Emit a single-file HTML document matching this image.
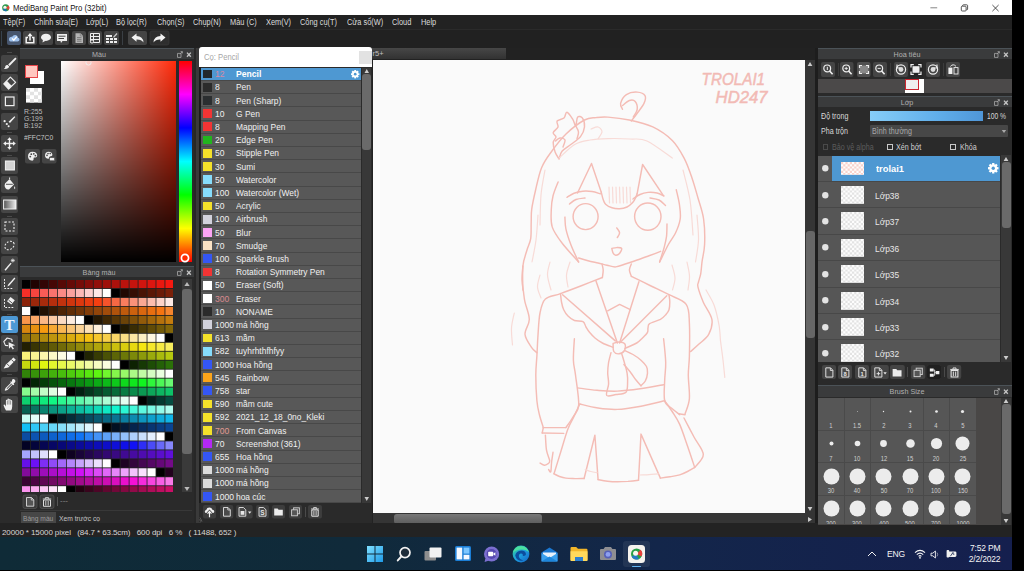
<!DOCTYPE html>
<html lang="vi"><head><meta charset="utf-8"><title>MediBang Paint Pro (32bit)</title>
<style>
html,body{margin:0;padding:0;background:#000}
body{width:1024px;height:571px;overflow:hidden;position:relative;font-family:"Liberation Sans",sans-serif}
#win{position:absolute;left:0;top:0;width:1012.4px;height:538px;background:#2a2a2a;overflow:hidden}
.t{position:absolute;white-space:nowrap;font-family:"Liberation Sans",sans-serif}
.btn{position:absolute;background:#444;border-radius:2px}
.hdr{position:absolute;background:#3a3b3c;border-top:1px solid #4b5257;box-sizing:border-box}
svg{overflow:visible}
</style></head><body><div id="win">
<div style="position:absolute;left:0px;top:0px;width:1012.4px;height:15.2px;background:#fff"></div><svg style="position:absolute;left:1.8px;top:3.8px;" width="7.4" height="7.4" viewBox="0 0 9 9"><circle cx="4.5" cy="4.5" r="4.3" fill="#2d9a4e"/><path d="M4.5 4.5 L8 1.8 A4.3 4.3 0 0 1 7.8 7.4 Z" fill="#e2453c"/><circle cx="3.6" cy="4.2" r="2" fill="#f4f6e8"/><path d="M1 6.5 A4.3 4.3 0 0 0 6 8.6 L4 5.5Z" fill="#1c6fb8"/></svg><div class="t" style="left:13.3px;top:2.7px;font-size:8.5px;line-height:10.5px;color:#111;transform-origin:0 0;transform:scaleX(0.916);">MediBang Paint Pro (32bit)</div><svg style="position:absolute;left:929px;top:2.5px;" width="10" height="10" viewBox="0 0 10 10"><path d="M1.4 4.8H8.2" stroke="#777" stroke-width="0.9" fill="none"/></svg><svg style="position:absolute;left:959px;top:2.5px;" width="10" height="10" viewBox="0 0 10 10"><rect x="2.3" y="3.2" width="4.8" height="4.8" rx="0.9" stroke="#444" stroke-width="0.9" fill="none"/><path d="M3.6 3V2.6Q3.6 1.8 4.4 1.8H7.8Q8.6 1.8 8.6 2.6V6Q8.6 6.8 7.8 6.8H7.4" stroke="#444" stroke-width="0.9" fill="none"/></svg><svg style="position:absolute;left:991px;top:2.5px;" width="10" height="10" viewBox="0 0 10 10"><path d="M1.4 2L7.6 8.2M7.6 2L1.4 8.2" stroke="#333" stroke-width="0.85" fill="none"/></svg><div style="position:absolute;left:0px;top:15.2px;width:1012.4px;height:14.3px;background:#222"></div><div class="t" style="left:3.2px;top:17.2px;font-size:8.5px;line-height:10.5px;color:#dcdcdc;transform-origin:0 0;transform:scaleX(0.87);">Tệp(F)</div><div class="t" style="left:33.7px;top:17.2px;font-size:8.5px;line-height:10.5px;color:#dcdcdc;transform-origin:0 0;transform:scaleX(0.87);">Chỉnh sửa(E)</div><div class="t" style="left:85.8px;top:17.2px;font-size:8.5px;line-height:10.5px;color:#dcdcdc;transform-origin:0 0;transform:scaleX(0.87);">Lớp(L)</div><div class="t" style="left:116.3px;top:17.2px;font-size:8.5px;line-height:10.5px;color:#dcdcdc;transform-origin:0 0;transform:scaleX(0.87);">Bộ lọc(R)</div><div class="t" style="left:156.8px;top:17.2px;font-size:8.5px;line-height:10.5px;color:#dcdcdc;transform-origin:0 0;transform:scaleX(0.87);">Chọn(S)</div><div class="t" style="left:192.6px;top:17.2px;font-size:8.5px;line-height:10.5px;color:#dcdcdc;transform-origin:0 0;transform:scaleX(0.87);">Chụp(N)</div><div class="t" style="left:229.7px;top:17.2px;font-size:8.5px;line-height:10.5px;color:#dcdcdc;transform-origin:0 0;transform:scaleX(0.87);">Màu (C)</div><div class="t" style="left:265.6px;top:17.2px;font-size:8.5px;line-height:10.5px;color:#dcdcdc;transform-origin:0 0;transform:scaleX(0.87);">Xem(V)</div><div class="t" style="left:300px;top:17.2px;font-size:8.5px;line-height:10.5px;color:#dcdcdc;transform-origin:0 0;transform:scaleX(0.87);">Công cụ(T)</div><div class="t" style="left:346.5px;top:17.2px;font-size:8.5px;line-height:10.5px;color:#dcdcdc;transform-origin:0 0;transform:scaleX(0.87);">Cửa sổ(W)</div><div class="t" style="left:391.8px;top:17.2px;font-size:8.5px;line-height:10.5px;color:#dcdcdc;transform-origin:0 0;transform:scaleX(0.87);">Cloud</div><div class="t" style="left:420.5px;top:17.2px;font-size:8.5px;line-height:10.5px;color:#dcdcdc;transform-origin:0 0;transform:scaleX(0.87);">Help</div><div style="position:absolute;left:0px;top:29.5px;width:1012.4px;height:18px;background:#212121"></div><div style="position:absolute;left:0.5px;top:30.5px;width:1.6px;height:15.5px;background:#37424d"></div><svg style="position:absolute;left:6.7px;top:31.3px;" width="14" height="14" viewBox="0 0 14 14"><rect width="14" height="14" rx="2" fill="#47566e"/><path d="M3.5 10.5H10.5Q12.5 10.5 12.5 8.6Q12.5 7 10.9 6.8Q10.6 4 8 4Q6 4 5.2 5.8Q2 5.6 2 8.3Q2 10.5 3.5 10.5Z" fill="#9fc2ee"/><path d="M5 7.4L6.8 9.2L9.8 5.6" stroke="#fff" stroke-width="1.3" fill="none"/></svg><svg style="position:absolute;left:22.8px;top:31.3px;" width="14" height="14" viewBox="0 0 14 14"><rect width="14" height="14" rx="2" fill="#444"/><path d="M5 6.4H3.2V11.8H10.8V6.4H9" stroke="#f4f4f4" stroke-width="1.5" fill="none"/><path d="M7 9.5V3.4" stroke="#f4f4f4" stroke-width="1.5" fill="none"/><path d="M4.4 5.2L7 2L9.6 5.2Z" fill="#f4f4f4"/></svg><svg style="position:absolute;left:39px;top:31.3px;" width="14" height="14" viewBox="0 0 14 14"><rect width="14" height="14" rx="2" fill="#444"/><ellipse cx="7" cy="6.3" rx="5" ry="3.6" fill="#eee"/><path d="M4 8.5L3.5 11.5L7 9.5Z" fill="#eee"/></svg><svg style="position:absolute;left:55.4px;top:31.3px;" width="14" height="14" viewBox="0 0 14 14"><rect width="14" height="14" rx="2" fill="#444"/><path d="M2 3H12V10H7.5L6 12L5.5 10H2Z" fill="#eee"/><path d="M3.5 5.2H10.5M3.5 7.5H9" stroke="#444" stroke-width="1"/></svg><svg style="position:absolute;left:71.7px;top:31.3px;" width="14" height="14" viewBox="0 0 14 14"><rect width="14" height="14" rx="2" fill="#444"/><path d="M3.5 2.2H8.5L11 4.7V12H3.5Z" fill="#b4b4b4"/><path d="M8.3 2.2V5H11" stroke="#777" stroke-width="0.7" fill="none"/><path d="M5 6.6H9.5M5 8.4H9.5M5 10.2H9.5" stroke="#6c6c6c" stroke-width="0.8"/></svg><svg style="position:absolute;left:87.9px;top:31.3px;" width="14" height="14" viewBox="0 0 14 14"><rect width="14" height="14" rx="2" fill="#444"/><path d="M2.5 2.5H11.5V11.5H2.5ZM2.5 5.5H11.5M2.5 8.5H11.5M5.5 2.5V11.5" stroke="#eee" stroke-width="1" fill="none"/><circle cx="4" cy="10.5" r="1.6" fill="#444" stroke="#eee" stroke-width="0.9"/></svg><svg style="position:absolute;left:104px;top:31.3px;" width="14" height="14" viewBox="0 0 14 14"><rect width="15" height="14" rx="2" fill="#444"/><path d="M2 4H8V6H2ZM2 7H5V9H2ZM6 7H9V9H6ZM10 7H13V9H10ZM2 10H5V12H2ZM6 10H9V12H6ZM10 10H13V12H10Z" fill="#eee"/><path d="M9 6L12.5 2L13.5 3L10 6.8Z" fill="#ccc"/></svg><div style="position:absolute;left:122px;top:31px;width:1px;height:14px;background:#3a3f44"></div><svg style="position:absolute;left:128.3px;top:31.3px;" width="19" height="14" viewBox="0 0 19 14"><rect width="19" height="14" rx="2" fill="#444"/><path d="M3.5 6.5L8.5 2.5V5Q15 5 15.5 11.5Q13.5 8.3 8.5 8.5V10.8Z" fill="#f2f2f2"/></svg><svg style="position:absolute;left:150.3px;top:31.3px;" width="19" height="14" viewBox="0 0 19 14"><rect width="19" height="14" rx="2" fill="#2e2e2e" stroke="#3c3c3c" stroke-width="0.6"/><path d="M15.5 6.5L10.5 2.5V5Q4 5 3.5 11.5Q5.5 8.3 10.5 8.5V10.8Z" fill="#f2f2f2"/></svg><div style="position:absolute;left:0px;top:47.5px;width:20px;height:480px;background:#2b2b2b"></div><svg style="position:absolute;left:1.2px;top:55px;" width="17" height="17" viewBox="0 0 17 17"><rect width="17" height="17" rx="2" fill="#454545"/><path d="M14.3 2.4L15.6 3.7L8.6 10.9L7.2 9.5Z" fill="#f0f0f0"/><path d="M6.6 9.9L8.2 11.5Q7.6 14.3 2.8 13.9Q4.6 12.8 4.3 11.3Q4.9 9.7 6.6 9.9Z" fill="#f0f0f0"/></svg><svg style="position:absolute;left:1.2px;top:74.2px;" width="17" height="17" viewBox="0 0 17 17"><rect width="17" height="17" rx="2" fill="#454545"/><path d="M9.4 3.2L14.6 8.4L7.6 15L2.8 9.8Z" fill="none" stroke="#f0f0f0" stroke-width="1.2" stroke-linejoin="round"/><path d="M2.8 9.8L5.8 6.8L10.8 12L7.6 15Z" fill="#f0f0f0"/></svg><svg style="position:absolute;left:1.2px;top:93.4px;" width="17" height="17" viewBox="0 0 17 17"><rect width="17" height="17" rx="2" fill="#454545"/><rect x="4.4" y="4" width="8.6" height="8.6" fill="none" stroke="#f0f0f0" stroke-width="1.2"/></svg><svg style="position:absolute;left:1.2px;top:112.6px;" width="17" height="17" viewBox="0 0 17 17"><rect width="17" height="17" rx="2" fill="#454545"/><path d="M13.4 3.2L14.3 4.1L9 10L7.6 8.7Z" fill="#f0f0f0"/><circle cx="3.6" cy="8.2" r="1.1" fill="#f0f0f0"/><circle cx="5.8" cy="11" r="1.1" fill="#f0f0f0"/><circle cx="7.6" cy="13.2" r="1" fill="#f0f0f0"/></svg><svg style="position:absolute;left:1.2px;top:134.6px;" width="17" height="17" viewBox="0 0 17 17"><rect width="17" height="17" rx="2" fill="#454545"/><path d="M8.5 2.2L10.8 5H9.2V7.8H12V6.2L14.8 8.5L12 10.8V9.2H9.2V12H10.8L8.5 14.8L6.2 12H7.8V9.2H5V10.8L2.2 8.5L5 6.2V7.8H7.8V5H6.2Z" fill="#f0f0f0"/></svg><svg style="position:absolute;left:1.2px;top:157px;" width="17" height="17" viewBox="0 0 17 17"><rect width="17" height="17" rx="2" fill="#454545"/><rect x="4.4" y="4" width="9" height="9" fill="#d4d4d4" stroke="#f4f4f4" stroke-width="1"/></svg><svg style="position:absolute;left:1.2px;top:176.2px;" width="17" height="17" viewBox="0 0 17 17"><rect width="17" height="17" rx="2" fill="#454545"/><path d="M4 7.5L8.6 3L13 8.4L8 13.4Q6 14 4.4 12Q3 10 4 7.5Z" fill="#f0f0f0"/><path d="M5 8.3L11.8 8.3" stroke="#454545" stroke-width="0.9"/><path d="M13.6 10Q15 12.3 13.7 13.2Q12.4 12.5 13.6 10Z" fill="#f0f0f0"/><path d="M8.6 3V1.5" stroke="#f0f0f0" stroke-width="1"/></svg><svg style="position:absolute;left:1.2px;top:195.5px;" width="17" height="17" viewBox="0 0 17 17"><rect width="17" height="17" rx="2" fill="#454545"/><defs><linearGradient id="tg" x1="0" x2="1"><stop offset="0" stop-color="#555"/><stop offset="1" stop-color="#eee"/></linearGradient></defs><rect x="2.6" y="4" width="12.4" height="9" fill="url(#tg)" stroke="#f0f0f0" stroke-width="1"/></svg><svg style="position:absolute;left:1.2px;top:218px;" width="17" height="17" viewBox="0 0 17 17"><rect width="17" height="17" rx="2" fill="#454545"/><rect x="4" y="4" width="9" height="9" fill="none" stroke="#f0f0f0" stroke-width="1.1" stroke-dasharray="2 1.5"/></svg><svg style="position:absolute;left:1.2px;top:237px;" width="17" height="17" viewBox="0 0 17 17"><rect width="17" height="17" rx="2" fill="#454545"/><ellipse cx="8.5" cy="8.5" rx="5" ry="3.8" transform="rotate(-35 8.5 8.5)" fill="none" stroke="#f0f0f0" stroke-width="1.1" stroke-dasharray="1.8 1.5"/></svg><svg style="position:absolute;left:1.2px;top:256px;" width="17" height="17" viewBox="0 0 17 17"><rect width="17" height="17" rx="2" fill="#454545"/><path d="M3.5 13.8L4.6 14.7L10.6 7.6L9.5 6.7Z" fill="#f0f0f0"/><path d="M11.8 2.5V6.5M9.8 4.5H13.8M10.4 3.1L13.2 5.9M13.2 3.1L10.4 5.9" stroke="#f0f0f0" stroke-width="0.7"/></svg><svg style="position:absolute;left:1.2px;top:275px;" width="17" height="17" viewBox="0 0 17 17"><rect width="17" height="17" rx="2" fill="#454545"/><path d="M3.5 4V13.5H12" fill="none" stroke="#f0f0f0" stroke-width="1" stroke-dasharray="1.8 1.3"/><path d="M13.4 2.6L14.4 3.6L8.3 10.6L6.4 11.5L7.2 9.6Z" fill="#f0f0f0"/></svg><svg style="position:absolute;left:1.2px;top:294px;" width="17" height="17" viewBox="0 0 17 17"><rect width="17" height="17" rx="2" fill="#454545"/><path d="M3.5 5V13.5H13" fill="none" stroke="#f0f0f0" stroke-width="1" stroke-dasharray="1.8 1.3"/><path d="M9.5 3L13.8 6.3L10.3 10.6L6 7.3Z" fill="#f0f0f0"/><path d="M7.6 6.2L11.2 9" stroke="#454545" stroke-width="0.9"/></svg><svg style="position:absolute;left:1.2px;top:316px;" width="17" height="17" viewBox="0 0 17 17"><rect width="17" height="17" rx="2" fill="#4c98d4"/><text x="8.5" y="13.8" font-family="Liberation Serif,serif" font-size="15.5" font-weight="bold" fill="#eef6ff" text-anchor="middle">T</text></svg><svg style="position:absolute;left:1.2px;top:335.2px;" width="17" height="17" viewBox="0 0 17 17"><rect width="17" height="17" rx="2" fill="#454545"/><path d="M7.2 10.6L4.4 10.4L2.8 6.6L6.2 3L10.8 4.2L11.2 7" fill="none" stroke="#f0f0f0" stroke-width="1.1" stroke-linejoin="round"/><path d="M7.6 7.2L14.2 10.2L11.2 11L13 13.8L11.7 14.6L9.9 11.8L8 13.8Z" fill="#f0f0f0"/></svg><svg style="position:absolute;left:1.2px;top:354.6px;" width="17" height="17" viewBox="0 0 17 17"><rect width="17" height="17" rx="2" fill="#454545"/><path d="M12.4 2.6L14.8 4.8L7.4 12.4L2.6 13.6L5 9.6Z" fill="#f0f0f0"/><path d="M6 8.8L8.4 11.2M10.4 4.6L12.8 6.8" stroke="#454545" stroke-width="0.9"/></svg><svg style="position:absolute;left:1.2px;top:376.5px;" width="17" height="17" viewBox="0 0 17 17"><rect width="17" height="17" rx="2" fill="#454545"/><path d="M11.2 2.4Q12.8 1.6 14 3Q15 4.4 13.8 5.6L12.6 6.6L13.3 7.4L12.4 8.2L11.7 7.5L6.5 13L4.2 13.8L3.7 13.2L4.6 11L9.9 5.8L9.2 5L10 4.2L10.8 4.9Z" fill="#f0f0f0"/><path d="M5.6 11.4L10.4 6.6L11 7.2L6.2 12Z" fill="#454545"/></svg><svg style="position:absolute;left:1.2px;top:395.8px;" width="17" height="17" viewBox="0 0 17 17"><rect width="17" height="17" rx="2" fill="#454545"/><path d="M5 14.5Q3.4 12 2.6 9.6Q2.5 8.6 3.3 8.6Q4 8.7 4.9 10.4V4.6Q4.9 3.7 5.6 3.7Q6.4 3.7 6.4 4.6V3.4Q6.4 2.5 7.2 2.5Q8 2.5 8 3.4V3.8Q8 3 8.8 3Q9.6 3 9.6 3.8V4.8Q9.6 4.1 10.4 4.1Q11.2 4.1 11.2 5V10.6Q11.2 13 10 14.5Z" fill="#f0f0f0"/><path d="M6.4 4.6V8.6M8 3.8V8.6M9.6 4.8V8.6" stroke="#454545" stroke-width="0.5"/></svg><div style="position:absolute;left:7px;top:52.2px;width:5px;height:1px;background:#4a4a4a"></div><div style="position:absolute;left:7px;top:132.3px;width:5px;height:1px;background:#4a4a4a"></div><div style="position:absolute;left:7px;top:155px;width:5px;height:1px;background:#4a4a4a"></div><div style="position:absolute;left:7px;top:215.8px;width:5px;height:1px;background:#4a4a4a"></div><div style="position:absolute;left:7px;top:314.3px;width:5px;height:1px;background:#4a4a4a"></div><div style="position:absolute;left:7px;top:374.3px;width:5px;height:1px;background:#4a4a4a"></div><div style="position:absolute;left:20px;top:47.5px;width:175px;height:220px;background:#2a2a2a"></div><div class="hdr" style="left:20px;top:47.5px;width:174.5px;height:11.5px"></div><div class="t" style="left:98.5px;top:49.5px;font-size:8px;line-height:10px;color:#b0b0b0;line-height:9px;transform:translateX(-50%) scaleX(0.9);">Màu</div><svg style="position:absolute;left:174.5px;top:49.5px;" width="20" height="9" viewBox="0 0 20 9"><path d="M2.5 3.4H6V7.4H2.5Z" fill="none" stroke="#a8a8a8" stroke-width="0.8"/><path d="M5 4.2L7.2 1.8M5.6 1.6H7.4V3.4" stroke="#a8a8a8" stroke-width="0.8" fill="none"/><path d="M12 2.6L15.8 6.8M15.8 2.6L12 6.8" stroke="#c4c4c4" stroke-width="1.4"/></svg><div style="position:absolute;left:30px;top:70.5px;width:14px;height:13.5px;background:#fff"></div><div style="position:absolute;left:24.7px;top:65px;width:13.3px;height:13.3px;background:#ffc7c0;border:1.6px solid #e8464a;box-sizing:border-box"></div><svg style="position:absolute;left:26.2px;top:88px;" width="15.8" height="14.6" viewBox="0 0 15.8 14.6"><rect width="15.8" height="14.6" fill="#fff"/><path d="M0 0H4V3.7H0ZM8 0H12V3.7H8ZM4 3.7H8V7.3H4ZM12 3.7H15.8V7.3H12ZM0 7.3H4V11H0ZM8 7.3H12V11H8ZM4 11H8V14.6H4ZM12 11H15.8V14.6H12Z" fill="#e2e2e2"/></svg><div class="t" style="left:24px;top:107.6px;font-size:8px;line-height:10px;color:#bdbdbd;transform-origin:0 0;transform:scaleX(0.86);line-height:8px">R:255</div><div class="t" style="left:24px;top:115px;font-size:8px;line-height:10px;color:#bdbdbd;transform-origin:0 0;transform:scaleX(0.86);line-height:8px">G:199</div><div class="t" style="left:24px;top:122.4px;font-size:8px;line-height:10px;color:#bdbdbd;transform-origin:0 0;transform:scaleX(0.86);line-height:8px">B:192</div><div class="t" style="left:24px;top:133.8px;font-size:8px;line-height:10px;color:#c8c8c8;transform-origin:0 0;transform:scaleX(0.84);line-height:8px">#FFC7C0</div><svg style="position:absolute;left:25px;top:148.8px;" width="15" height="14.5" viewBox="0 0 15 14.5"><rect width="15" height="14.5" rx="2" fill="#454545"/><path d="M7.5 2.8Q12 2.8 12.2 6.6Q12.2 8.6 10.4 8.6H9.4Q8.4 8.6 8.6 9.6Q9 11.6 7.3 11.7Q3 11.4 3 7.2Q3.2 3 7.5 2.8Z" fill="#eee"/><circle cx="5.3" cy="7.6" r="0.9" fill="#454545"/><circle cx="6.3" cy="5.2" r="0.9" fill="#454545"/><circle cx="8.8" cy="4.8" r="0.9" fill="#454545"/><circle cx="10.4" cy="6.6" r="0.9" fill="#454545"/></svg><svg style="position:absolute;left:42px;top:148.8px;" width="14.5" height="14.5" viewBox="0 0 14.5 14.5"><rect width="14.5" height="14.5" rx="2" fill="#454545"/><path d="M6.5 2.8Q10 2.8 10.4 5.8Q10.4 7.2 9 7.2H8.4Q7.4 7.2 7.6 8.2Q7.8 9.6 6.4 9.7Q3 9.4 3 6.4Q3.2 3 6.5 2.8Z" fill="#eee"/><circle cx="5" cy="6.4" r="0.8" fill="#454545"/><circle cx="6" cy="4.6" r="0.8" fill="#454545"/><circle cx="8.2" cy="4.6" r="0.8" fill="#454545"/><rect x="7.6" y="8.6" width="5" height="3.2" fill="#eee" stroke="#454545" stroke-width="0.6"/></svg><div style="position:absolute;left:61px;top:60.8px;width:115px;height:201.2px;background:linear-gradient(to bottom,rgba(0,0,0,0),#000),linear-gradient(to right,#fff,#ff2a0a)"></div><svg style="position:absolute;left:84px;top:57.5px;clip-path:inset(4px 0 0 0)" width="9" height="9" viewBox="0 0 9 9"><circle cx="4.5" cy="4.5" r="2.6" fill="none" stroke="#eee" stroke-width="1"/></svg><div style="position:absolute;left:179px;top:60.8px;width:13px;height:201.6px;background:linear-gradient(to bottom,#ff0000 0%,#ff00ff 16.6%,#0000ff 33.3%,#00ffff 50%,#00ff00 66.6%,#ffff00 83.3%,#ff0000 100%)"></div><svg style="position:absolute;left:180.2px;top:253.4px;" width="10" height="10" viewBox="0 0 10 10"><circle cx="5" cy="5" r="3.6" fill="#ff2a00" stroke="#fff" stroke-width="1.7"/></svg><div style="position:absolute;left:20px;top:266px;width:175px;height:262px;background:#2a2a2a"></div><div class="hdr" style="left:20px;top:265.8px;width:174.5px;height:11.4px"></div><div class="t" style="left:98.5px;top:267.8px;font-size:8px;line-height:10px;color:#b0b0b0;line-height:9px;transform:translateX(-50%) scaleX(0.9);">Bảng màu</div><svg style="position:absolute;left:174.5px;top:267.8px;" width="20" height="9" viewBox="0 0 20 9"><path d="M2.5 3.4H6V7.4H2.5Z" fill="none" stroke="#a8a8a8" stroke-width="0.8"/><path d="M5 4.2L7.2 1.8M5.6 1.6H7.4V3.4" stroke="#a8a8a8" stroke-width="0.8" fill="none"/><path d="M12 2.6L15.8 6.8M15.8 2.6L12 6.8" stroke="#c4c4c4" stroke-width="1.4"/></svg><div style="position:absolute;left:21.6px;top:279.8px;width:151.6px;height:212px;overflow:hidden;background:#212121"><svg width="153" height="216" viewBox="0 0 153 216" style="position:absolute;left:0;top:0"><rect x="0.00" y="0.00" width="8.15" height="8.1" fill="#000000"/><rect x="8.96" y="0.00" width="8.15" height="8.1" fill="#1f0302"/><rect x="17.92" y="0.00" width="8.15" height="8.1" fill="#330504"/><rect x="26.88" y="0.00" width="8.15" height="8.1" fill="#460705"/><rect x="35.84" y="0.00" width="8.15" height="8.1" fill="#570906"/><rect x="44.80" y="0.00" width="8.15" height="8.1" fill="#660a07"/><rect x="53.76" y="0.00" width="8.15" height="8.1" fill="#750c08"/><rect x="62.72" y="0.00" width="8.15" height="8.1" fill="#840d09"/><rect x="71.68" y="0.00" width="8.15" height="8.1" fill="#920f0a"/><rect x="80.64" y="0.00" width="8.15" height="8.1" fill="#9f100b"/><rect x="89.60" y="0.00" width="8.15" height="8.1" fill="#ac110c"/><rect x="98.56" y="0.00" width="8.15" height="8.1" fill="#b9130d"/><rect x="107.52" y="0.00" width="8.15" height="8.1" fill="#c5140e"/><rect x="116.48" y="0.00" width="8.15" height="8.1" fill="#d1150f"/><rect x="125.44" y="0.00" width="8.15" height="8.1" fill="#dd1610"/><rect x="134.40" y="0.00" width="8.15" height="8.1" fill="#e91810"/><rect x="143.36" y="0.00" width="8.15" height="8.1" fill="#f51911"/><rect x="0.00" y="8.96" width="8.15" height="8.1" fill="#f62f28"/><rect x="8.96" y="8.96" width="8.15" height="8.1" fill="#f7453f"/><rect x="17.92" y="8.96" width="8.15" height="8.1" fill="#f85c57"/><rect x="26.88" y="8.96" width="8.15" height="8.1" fill="#f9736e"/><rect x="35.84" y="8.96" width="8.15" height="8.1" fill="#fa8a86"/><rect x="44.80" y="8.96" width="8.15" height="8.1" fill="#fba19e"/><rect x="53.76" y="8.96" width="8.15" height="8.1" fill="#fcb8b6"/><rect x="62.72" y="8.96" width="8.15" height="8.1" fill="#fdcfce"/><rect x="71.68" y="8.96" width="8.15" height="8.1" fill="#fee7e6"/><rect x="80.64" y="8.96" width="8.15" height="8.1" fill="#ffffff"/><rect x="89.60" y="8.96" width="8.15" height="8.1" fill="#000000"/><rect x="98.56" y="8.96" width="8.15" height="8.1" fill="#200802"/><rect x="107.52" y="8.96" width="8.15" height="8.1" fill="#360e04"/><rect x="116.48" y="8.96" width="8.15" height="8.1" fill="#491305"/><rect x="125.44" y="8.96" width="8.15" height="8.1" fill="#5b1706"/><rect x="134.40" y="8.96" width="8.15" height="8.1" fill="#6b1b08"/><rect x="143.36" y="8.96" width="8.15" height="8.1" fill="#7b2009"/><rect x="0.00" y="17.93" width="8.15" height="8.1" fill="#8a230a"/><rect x="8.96" y="17.93" width="8.15" height="8.1" fill="#99270b"/><rect x="17.92" y="17.93" width="8.15" height="8.1" fill="#a72b0c"/><rect x="26.88" y="17.93" width="8.15" height="8.1" fill="#b52e0d"/><rect x="35.84" y="17.93" width="8.15" height="8.1" fill="#c2320e"/><rect x="44.80" y="17.93" width="8.15" height="8.1" fill="#cf350e"/><rect x="53.76" y="17.93" width="8.15" height="8.1" fill="#dc380f"/><rect x="62.72" y="17.93" width="8.15" height="8.1" fill="#e83c10"/><rect x="71.68" y="17.93" width="8.15" height="8.1" fill="#f53f11"/><rect x="80.64" y="17.93" width="8.15" height="8.1" fill="#f6532b"/><rect x="89.60" y="17.93" width="8.15" height="8.1" fill="#f76844"/><rect x="98.56" y="17.93" width="8.15" height="8.1" fill="#f87d5e"/><rect x="107.52" y="17.93" width="8.15" height="8.1" fill="#f99279"/><rect x="116.48" y="17.93" width="8.15" height="8.1" fill="#faa893"/><rect x="125.44" y="17.93" width="8.15" height="8.1" fill="#fcbdae"/><rect x="134.40" y="17.93" width="8.15" height="8.1" fill="#fdd3c9"/><rect x="143.36" y="17.93" width="8.15" height="8.1" fill="#fee9e4"/><rect x="0.00" y="26.89" width="8.15" height="8.1" fill="#ffffff"/><rect x="8.96" y="26.89" width="8.15" height="8.1" fill="#000000"/><rect x="17.92" y="26.89" width="8.15" height="8.1" fill="#221002"/><rect x="26.88" y="26.89" width="8.15" height="8.1" fill="#391b04"/><rect x="35.84" y="26.89" width="8.15" height="8.1" fill="#4d2405"/><rect x="44.80" y="26.89" width="8.15" height="8.1" fill="#602d07"/><rect x="53.76" y="26.89" width="8.15" height="8.1" fill="#713508"/><rect x="62.72" y="26.89" width="8.15" height="8.1" fill="#823d09"/><rect x="71.68" y="26.89" width="8.15" height="8.1" fill="#92450a"/><rect x="80.64" y="26.89" width="8.15" height="8.1" fill="#a14c0b"/><rect x="89.60" y="26.89" width="8.15" height="8.1" fill="#b0530c"/><rect x="98.56" y="26.89" width="8.15" height="8.1" fill="#be5a0d"/><rect x="107.52" y="26.89" width="8.15" height="8.1" fill="#cc610e"/><rect x="116.48" y="26.89" width="8.15" height="8.1" fill="#da670f"/><rect x="125.44" y="26.89" width="8.15" height="8.1" fill="#e86e10"/><rect x="134.40" y="26.89" width="8.15" height="8.1" fill="#f57411"/><rect x="143.36" y="26.89" width="8.15" height="8.1" fill="#f6852e"/><rect x="0.00" y="35.86" width="8.15" height="8.1" fill="#f7964b"/><rect x="8.96" y="35.86" width="8.15" height="8.1" fill="#f9a768"/><rect x="17.92" y="35.86" width="8.15" height="8.1" fill="#fab886"/><rect x="26.88" y="35.86" width="8.15" height="8.1" fill="#fbcaa4"/><rect x="35.84" y="35.86" width="8.15" height="8.1" fill="#fcdbc2"/><rect x="44.80" y="35.86" width="8.15" height="8.1" fill="#feede0"/><rect x="53.76" y="35.86" width="8.15" height="8.1" fill="#ffffff"/><rect x="62.72" y="35.86" width="8.15" height="8.1" fill="#000000"/><rect x="71.68" y="35.86" width="8.15" height="8.1" fill="#261803"/><rect x="80.64" y="35.86" width="8.15" height="8.1" fill="#402804"/><rect x="89.60" y="35.86" width="8.15" height="8.1" fill="#573606"/><rect x="98.56" y="35.86" width="8.15" height="8.1" fill="#6b4308"/><rect x="107.52" y="35.86" width="8.15" height="8.1" fill="#7f5009"/><rect x="116.48" y="35.86" width="8.15" height="8.1" fill="#925b0a"/><rect x="125.44" y="35.86" width="8.15" height="8.1" fill="#a3670b"/><rect x="134.40" y="35.86" width="8.15" height="8.1" fill="#b5710d"/><rect x="143.36" y="35.86" width="8.15" height="8.1" fill="#c57c0e"/><rect x="0.00" y="44.83" width="8.15" height="8.1" fill="#d6860f"/><rect x="8.96" y="44.83" width="8.15" height="8.1" fill="#e59010"/><rect x="17.92" y="44.83" width="8.15" height="8.1" fill="#f59a11"/><rect x="26.88" y="44.83" width="8.15" height="8.1" fill="#f6a832"/><rect x="35.84" y="44.83" width="8.15" height="8.1" fill="#f8b653"/><rect x="44.80" y="44.83" width="8.15" height="8.1" fill="#f9c475"/><rect x="53.76" y="44.83" width="8.15" height="8.1" fill="#fbd397"/><rect x="62.72" y="44.83" width="8.15" height="8.1" fill="#fce1b9"/><rect x="71.68" y="44.83" width="8.15" height="8.1" fill="#fef0dc"/><rect x="80.64" y="44.83" width="8.15" height="8.1" fill="#ffffff"/><rect x="89.60" y="44.83" width="8.15" height="8.1" fill="#000000"/><rect x="98.56" y="44.83" width="8.15" height="8.1" fill="#221a02"/><rect x="107.52" y="44.83" width="8.15" height="8.1" fill="#392d04"/><rect x="116.48" y="44.83" width="8.15" height="8.1" fill="#4d3c05"/><rect x="125.44" y="44.83" width="8.15" height="8.1" fill="#604b07"/><rect x="134.40" y="44.83" width="8.15" height="8.1" fill="#715908"/><rect x="143.36" y="44.83" width="8.15" height="8.1" fill="#826609"/><rect x="0.00" y="53.79" width="8.15" height="8.1" fill="#92720a"/><rect x="8.96" y="53.79" width="8.15" height="8.1" fill="#a17e0b"/><rect x="17.92" y="53.79" width="8.15" height="8.1" fill="#b08a0c"/><rect x="26.88" y="53.79" width="8.15" height="8.1" fill="#be950d"/><rect x="35.84" y="53.79" width="8.15" height="8.1" fill="#cca00e"/><rect x="44.80" y="53.79" width="8.15" height="8.1" fill="#daab0f"/><rect x="53.76" y="53.79" width="8.15" height="8.1" fill="#e8b510"/><rect x="62.72" y="53.79" width="8.15" height="8.1" fill="#f5c011"/><rect x="71.68" y="53.79" width="8.15" height="8.1" fill="#f6c72e"/><rect x="80.64" y="53.79" width="8.15" height="8.1" fill="#f7cf4b"/><rect x="89.60" y="53.79" width="8.15" height="8.1" fill="#f9d768"/><rect x="98.56" y="53.79" width="8.15" height="8.1" fill="#fadf86"/><rect x="107.52" y="53.79" width="8.15" height="8.1" fill="#fbe7a4"/><rect x="116.48" y="53.79" width="8.15" height="8.1" fill="#fcefc2"/><rect x="125.44" y="53.79" width="8.15" height="8.1" fill="#fef7e0"/><rect x="134.40" y="53.79" width="8.15" height="8.1" fill="#ffffff"/><rect x="143.36" y="53.79" width="8.15" height="8.1" fill="#000000"/><rect x="0.00" y="62.75" width="8.15" height="8.1" fill="#222002"/><rect x="8.96" y="62.75" width="8.15" height="8.1" fill="#393504"/><rect x="17.92" y="62.75" width="8.15" height="8.1" fill="#4d4805"/><rect x="26.88" y="62.75" width="8.15" height="8.1" fill="#605a07"/><rect x="35.84" y="62.75" width="8.15" height="8.1" fill="#716a08"/><rect x="44.80" y="62.75" width="8.15" height="8.1" fill="#827a09"/><rect x="53.76" y="62.75" width="8.15" height="8.1" fill="#92890a"/><rect x="62.72" y="62.75" width="8.15" height="8.1" fill="#a1970b"/><rect x="71.68" y="62.75" width="8.15" height="8.1" fill="#b0a50c"/><rect x="80.64" y="62.75" width="8.15" height="8.1" fill="#beb20d"/><rect x="89.60" y="62.75" width="8.15" height="8.1" fill="#ccc00e"/><rect x="98.56" y="62.75" width="8.15" height="8.1" fill="#dacd0f"/><rect x="107.52" y="62.75" width="8.15" height="8.1" fill="#e8d910"/><rect x="116.48" y="62.75" width="8.15" height="8.1" fill="#f5e611"/><rect x="125.44" y="62.75" width="8.15" height="8.1" fill="#f6e82b"/><rect x="134.40" y="62.75" width="8.15" height="8.1" fill="#f7eb44"/><rect x="143.36" y="62.75" width="8.15" height="8.1" fill="#f8ee5e"/><rect x="0.00" y="71.72" width="8.15" height="8.1" fill="#f9f179"/><rect x="8.96" y="71.72" width="8.15" height="8.1" fill="#faf493"/><rect x="17.92" y="71.72" width="8.15" height="8.1" fill="#fcf6ae"/><rect x="26.88" y="71.72" width="8.15" height="8.1" fill="#fdf9c9"/><rect x="35.84" y="71.72" width="8.15" height="8.1" fill="#fefce4"/><rect x="44.80" y="71.72" width="8.15" height="8.1" fill="#ffffff"/><rect x="53.76" y="71.72" width="8.15" height="8.1" fill="#000000"/><rect x="62.72" y="71.72" width="8.15" height="8.1" fill="#202403"/><rect x="71.68" y="71.72" width="8.15" height="8.1" fill="#373c04"/><rect x="80.64" y="71.72" width="8.15" height="8.1" fill="#4a5206"/><rect x="89.60" y="71.72" width="8.15" height="8.1" fill="#5c6507"/><rect x="98.56" y="71.72" width="8.15" height="8.1" fill="#6c7808"/><rect x="107.52" y="71.72" width="8.15" height="8.1" fill="#7c890a"/><rect x="116.48" y="71.72" width="8.15" height="8.1" fill="#8c9a0b"/><rect x="125.44" y="71.72" width="8.15" height="8.1" fill="#9aaa0c"/><rect x="134.40" y="71.72" width="8.15" height="8.1" fill="#a9ba0d"/><rect x="143.36" y="71.72" width="8.15" height="8.1" fill="#b6c90e"/><rect x="0.00" y="80.69" width="8.15" height="8.1" fill="#c4d80f"/><rect x="8.96" y="80.69" width="8.15" height="8.1" fill="#d1e710"/><rect x="17.92" y="80.69" width="8.15" height="8.1" fill="#def511"/><rect x="26.88" y="80.69" width="8.15" height="8.1" fill="#e2f62e"/><rect x="35.84" y="80.69" width="8.15" height="8.1" fill="#e6f74b"/><rect x="44.80" y="80.69" width="8.15" height="8.1" fill="#eaf968"/><rect x="53.76" y="80.69" width="8.15" height="8.1" fill="#eefa86"/><rect x="62.72" y="80.69" width="8.15" height="8.1" fill="#f2fba4"/><rect x="71.68" y="80.69" width="8.15" height="8.1" fill="#f7fcc2"/><rect x="80.64" y="80.69" width="8.15" height="8.1" fill="#fbfee0"/><rect x="89.60" y="80.69" width="8.15" height="8.1" fill="#ffffff"/><rect x="98.56" y="80.69" width="8.15" height="8.1" fill="#000000"/><rect x="107.52" y="80.69" width="8.15" height="8.1" fill="#0d2202"/><rect x="116.48" y="80.69" width="8.15" height="8.1" fill="#163904"/><rect x="125.44" y="80.69" width="8.15" height="8.1" fill="#1d4d05"/><rect x="134.40" y="80.69" width="8.15" height="8.1" fill="#246007"/><rect x="143.36" y="80.69" width="8.15" height="8.1" fill="#2b7108"/><rect x="0.00" y="89.65" width="8.15" height="8.1" fill="#318209"/><rect x="8.96" y="89.65" width="8.15" height="8.1" fill="#37920a"/><rect x="17.92" y="89.65" width="8.15" height="8.1" fill="#3da10b"/><rect x="26.88" y="89.65" width="8.15" height="8.1" fill="#43b00c"/><rect x="35.84" y="89.65" width="8.15" height="8.1" fill="#48be0d"/><rect x="44.80" y="89.65" width="8.15" height="8.1" fill="#4ecc0e"/><rect x="53.76" y="89.65" width="8.15" height="8.1" fill="#53da0f"/><rect x="62.72" y="89.65" width="8.15" height="8.1" fill="#58e810"/><rect x="71.68" y="89.65" width="8.15" height="8.1" fill="#5df511"/><rect x="80.64" y="89.65" width="8.15" height="8.1" fill="#71f62e"/><rect x="89.60" y="89.65" width="8.15" height="8.1" fill="#84f74b"/><rect x="98.56" y="89.65" width="8.15" height="8.1" fill="#98f968"/><rect x="107.52" y="89.65" width="8.15" height="8.1" fill="#acfa86"/><rect x="116.48" y="89.65" width="8.15" height="8.1" fill="#c1fba4"/><rect x="125.44" y="89.65" width="8.15" height="8.1" fill="#d5fcc2"/><rect x="134.40" y="89.65" width="8.15" height="8.1" fill="#eafee0"/><rect x="143.36" y="89.65" width="8.15" height="8.1" fill="#ffffff"/><rect x="0.00" y="98.61" width="8.15" height="8.1" fill="#000000"/><rect x="8.96" y="98.61" width="8.15" height="8.1" fill="#032405"/><rect x="17.92" y="98.61" width="8.15" height="8.1" fill="#043c08"/><rect x="26.88" y="98.61" width="8.15" height="8.1" fill="#06520b"/><rect x="35.84" y="98.61" width="8.15" height="8.1" fill="#07650d"/><rect x="44.80" y="98.61" width="8.15" height="8.1" fill="#087810"/><rect x="53.76" y="98.61" width="8.15" height="8.1" fill="#0a8912"/><rect x="62.72" y="98.61" width="8.15" height="8.1" fill="#0b9a14"/><rect x="71.68" y="98.61" width="8.15" height="8.1" fill="#0caa16"/><rect x="80.64" y="98.61" width="8.15" height="8.1" fill="#0dba19"/><rect x="89.60" y="98.61" width="8.15" height="8.1" fill="#0ec91b"/><rect x="98.56" y="98.61" width="8.15" height="8.1" fill="#0fd81d"/><rect x="107.52" y="98.61" width="8.15" height="8.1" fill="#10e71e"/><rect x="116.48" y="98.61" width="8.15" height="8.1" fill="#11f520"/><rect x="125.44" y="98.61" width="8.15" height="8.1" fill="#2ef63b"/><rect x="134.40" y="98.61" width="8.15" height="8.1" fill="#4bf756"/><rect x="143.36" y="98.61" width="8.15" height="8.1" fill="#68f972"/><rect x="0.00" y="107.58" width="8.15" height="8.1" fill="#86fa8d"/><rect x="8.96" y="107.58" width="8.15" height="8.1" fill="#a4fba9"/><rect x="17.92" y="107.58" width="8.15" height="8.1" fill="#c2fcc6"/><rect x="26.88" y="107.58" width="8.15" height="8.1" fill="#e0fee2"/><rect x="35.84" y="107.58" width="8.15" height="8.1" fill="#ffffff"/><rect x="44.80" y="107.58" width="8.15" height="8.1" fill="#000000"/><rect x="53.76" y="107.58" width="8.15" height="8.1" fill="#022011"/><rect x="62.72" y="107.58" width="8.15" height="8.1" fill="#04361d"/><rect x="71.68" y="107.58" width="8.15" height="8.1" fill="#054927"/><rect x="80.64" y="107.58" width="8.15" height="8.1" fill="#065b31"/><rect x="89.60" y="107.58" width="8.15" height="8.1" fill="#086b39"/><rect x="98.56" y="107.58" width="8.15" height="8.1" fill="#097b42"/><rect x="107.52" y="107.58" width="8.15" height="8.1" fill="#0a8a4a"/><rect x="116.48" y="107.58" width="8.15" height="8.1" fill="#0b9952"/><rect x="125.44" y="107.58" width="8.15" height="8.1" fill="#0ca759"/><rect x="134.40" y="107.58" width="8.15" height="8.1" fill="#0db561"/><rect x="143.36" y="107.58" width="8.15" height="8.1" fill="#0ec268"/><rect x="0.00" y="116.55" width="8.15" height="8.1" fill="#0ecf6f"/><rect x="8.96" y="116.55" width="8.15" height="8.1" fill="#0fdc76"/><rect x="17.92" y="116.55" width="8.15" height="8.1" fill="#10e87c"/><rect x="26.88" y="116.55" width="8.15" height="8.1" fill="#11f583"/><rect x="35.84" y="116.55" width="8.15" height="8.1" fill="#2bf690"/><rect x="44.80" y="116.55" width="8.15" height="8.1" fill="#44f79e"/><rect x="53.76" y="116.55" width="8.15" height="8.1" fill="#5ef8ab"/><rect x="62.72" y="116.55" width="8.15" height="8.1" fill="#79f9b9"/><rect x="71.68" y="116.55" width="8.15" height="8.1" fill="#93fac7"/><rect x="80.64" y="116.55" width="8.15" height="8.1" fill="#aefcd5"/><rect x="89.60" y="116.55" width="8.15" height="8.1" fill="#c9fde3"/><rect x="98.56" y="116.55" width="8.15" height="8.1" fill="#e4fef1"/><rect x="107.52" y="116.55" width="8.15" height="8.1" fill="#ffffff"/><rect x="116.48" y="116.55" width="8.15" height="8.1" fill="#000000"/><rect x="125.44" y="116.55" width="8.15" height="8.1" fill="#02221d"/><rect x="134.40" y="116.55" width="8.15" height="8.1" fill="#043930"/><rect x="143.36" y="116.55" width="8.15" height="8.1" fill="#054d41"/><rect x="0.00" y="125.51" width="8.15" height="8.1" fill="#076051"/><rect x="8.96" y="125.51" width="8.15" height="8.1" fill="#087160"/><rect x="17.92" y="125.51" width="8.15" height="8.1" fill="#09826e"/><rect x="26.88" y="125.51" width="8.15" height="8.1" fill="#0a927b"/><rect x="35.84" y="125.51" width="8.15" height="8.1" fill="#0ba188"/><rect x="44.80" y="125.51" width="8.15" height="8.1" fill="#0cb095"/><rect x="53.76" y="125.51" width="8.15" height="8.1" fill="#0dbea1"/><rect x="62.72" y="125.51" width="8.15" height="8.1" fill="#0eccad"/><rect x="71.68" y="125.51" width="8.15" height="8.1" fill="#0fdab8"/><rect x="80.64" y="125.51" width="8.15" height="8.1" fill="#10e8c4"/><rect x="89.60" y="125.51" width="8.15" height="8.1" fill="#11f5cf"/><rect x="98.56" y="125.51" width="8.15" height="8.1" fill="#2bf6d4"/><rect x="107.52" y="125.51" width="8.15" height="8.1" fill="#44f7d9"/><rect x="116.48" y="125.51" width="8.15" height="8.1" fill="#5ef8df"/><rect x="125.44" y="125.51" width="8.15" height="8.1" fill="#79f9e4"/><rect x="134.40" y="125.51" width="8.15" height="8.1" fill="#93fae9"/><rect x="143.36" y="125.51" width="8.15" height="8.1" fill="#aefcef"/><rect x="0.00" y="134.47" width="8.15" height="8.1" fill="#c9fdf4"/><rect x="8.96" y="134.47" width="8.15" height="8.1" fill="#e4fef9"/><rect x="17.92" y="134.47" width="8.15" height="8.1" fill="#ffffff"/><rect x="26.88" y="134.47" width="8.15" height="8.1" fill="#000000"/><rect x="35.84" y="134.47" width="8.15" height="8.1" fill="#021a22"/><rect x="44.80" y="134.47" width="8.15" height="8.1" fill="#042d39"/><rect x="53.76" y="134.47" width="8.15" height="8.1" fill="#053c4d"/><rect x="62.72" y="134.47" width="8.15" height="8.1" fill="#074b60"/><rect x="71.68" y="134.47" width="8.15" height="8.1" fill="#085971"/><rect x="80.64" y="134.47" width="8.15" height="8.1" fill="#096682"/><rect x="89.60" y="134.47" width="8.15" height="8.1" fill="#0a7292"/><rect x="98.56" y="134.47" width="8.15" height="8.1" fill="#0b7ea1"/><rect x="107.52" y="134.47" width="8.15" height="8.1" fill="#0c8ab0"/><rect x="116.48" y="134.47" width="8.15" height="8.1" fill="#0d95be"/><rect x="125.44" y="134.47" width="8.15" height="8.1" fill="#0ea0cc"/><rect x="134.40" y="134.47" width="8.15" height="8.1" fill="#0fabda"/><rect x="143.36" y="134.47" width="8.15" height="8.1" fill="#10b5e8"/><rect x="0.00" y="143.44" width="8.15" height="8.1" fill="#11c0f5"/><rect x="8.96" y="143.44" width="8.15" height="8.1" fill="#2ec7f6"/><rect x="17.92" y="143.44" width="8.15" height="8.1" fill="#4bcff7"/><rect x="26.88" y="143.44" width="8.15" height="8.1" fill="#68d7f9"/><rect x="35.84" y="143.44" width="8.15" height="8.1" fill="#86dffa"/><rect x="44.80" y="143.44" width="8.15" height="8.1" fill="#a4e7fb"/><rect x="53.76" y="143.44" width="8.15" height="8.1" fill="#c2effc"/><rect x="62.72" y="143.44" width="8.15" height="8.1" fill="#e0f7fe"/><rect x="71.68" y="143.44" width="8.15" height="8.1" fill="#ffffff"/><rect x="80.64" y="143.44" width="8.15" height="8.1" fill="#000000"/><rect x="89.60" y="143.44" width="8.15" height="8.1" fill="#021022"/><rect x="98.56" y="143.44" width="8.15" height="8.1" fill="#041b39"/><rect x="107.52" y="143.44" width="8.15" height="8.1" fill="#05244d"/><rect x="116.48" y="143.44" width="8.15" height="8.1" fill="#072d60"/><rect x="125.44" y="143.44" width="8.15" height="8.1" fill="#083571"/><rect x="134.40" y="143.44" width="8.15" height="8.1" fill="#093d82"/><rect x="143.36" y="143.44" width="8.15" height="8.1" fill="#0a4592"/><rect x="0.00" y="152.41" width="8.15" height="8.1" fill="#0b4ca1"/><rect x="8.96" y="152.41" width="8.15" height="8.1" fill="#0c53b0"/><rect x="17.92" y="152.41" width="8.15" height="8.1" fill="#0d5abe"/><rect x="26.88" y="152.41" width="8.15" height="8.1" fill="#0e61cc"/><rect x="35.84" y="152.41" width="8.15" height="8.1" fill="#0f67da"/><rect x="44.80" y="152.41" width="8.15" height="8.1" fill="#106ee8"/><rect x="53.76" y="152.41" width="8.15" height="8.1" fill="#1174f5"/><rect x="62.72" y="152.41" width="8.15" height="8.1" fill="#2b83f6"/><rect x="71.68" y="152.41" width="8.15" height="8.1" fill="#4492f7"/><rect x="80.64" y="152.41" width="8.15" height="8.1" fill="#5ea1f8"/><rect x="89.60" y="152.41" width="8.15" height="8.1" fill="#79b0f9"/><rect x="98.56" y="152.41" width="8.15" height="8.1" fill="#93c0fa"/><rect x="107.52" y="152.41" width="8.15" height="8.1" fill="#aecffc"/><rect x="116.48" y="152.41" width="8.15" height="8.1" fill="#c9dffd"/><rect x="125.44" y="152.41" width="8.15" height="8.1" fill="#e4effe"/><rect x="134.40" y="152.41" width="8.15" height="8.1" fill="#ffffff"/><rect x="143.36" y="152.41" width="8.15" height="8.1" fill="#000000"/><rect x="0.00" y="161.37" width="8.15" height="8.1" fill="#030324"/><rect x="8.96" y="161.37" width="8.15" height="8.1" fill="#04043c"/><rect x="17.92" y="161.37" width="8.15" height="8.1" fill="#060652"/><rect x="26.88" y="161.37" width="8.15" height="8.1" fill="#070765"/><rect x="35.84" y="161.37" width="8.15" height="8.1" fill="#080878"/><rect x="44.80" y="161.37" width="8.15" height="8.1" fill="#0a0a89"/><rect x="53.76" y="161.37" width="8.15" height="8.1" fill="#0b0b9a"/><rect x="62.72" y="161.37" width="8.15" height="8.1" fill="#0c0caa"/><rect x="71.68" y="161.37" width="8.15" height="8.1" fill="#0d0dba"/><rect x="80.64" y="161.37" width="8.15" height="8.1" fill="#0e0ec9"/><rect x="89.60" y="161.37" width="8.15" height="8.1" fill="#0f0fd8"/><rect x="98.56" y="161.37" width="8.15" height="8.1" fill="#1010e7"/><rect x="107.52" y="161.37" width="8.15" height="8.1" fill="#1111f5"/><rect x="116.48" y="161.37" width="8.15" height="8.1" fill="#2e2ef6"/><rect x="125.44" y="161.37" width="8.15" height="8.1" fill="#4b4bf7"/><rect x="134.40" y="161.37" width="8.15" height="8.1" fill="#6868f9"/><rect x="143.36" y="161.37" width="8.15" height="8.1" fill="#8686fa"/><rect x="0.00" y="170.34" width="8.15" height="8.1" fill="#a4a4fb"/><rect x="8.96" y="170.34" width="8.15" height="8.1" fill="#c2c2fc"/><rect x="17.92" y="170.34" width="8.15" height="8.1" fill="#e0e0fe"/><rect x="26.88" y="170.34" width="8.15" height="8.1" fill="#ffffff"/><rect x="35.84" y="170.34" width="8.15" height="8.1" fill="#000000"/><rect x="44.80" y="170.34" width="8.15" height="8.1" fill="#0f0222"/><rect x="53.76" y="170.34" width="8.15" height="8.1" fill="#190439"/><rect x="62.72" y="170.34" width="8.15" height="8.1" fill="#22054d"/><rect x="71.68" y="170.34" width="8.15" height="8.1" fill="#2a0760"/><rect x="80.64" y="170.34" width="8.15" height="8.1" fill="#320871"/><rect x="89.60" y="170.34" width="8.15" height="8.1" fill="#390982"/><rect x="98.56" y="170.34" width="8.15" height="8.1" fill="#400a92"/><rect x="107.52" y="170.34" width="8.15" height="8.1" fill="#470ba1"/><rect x="116.48" y="170.34" width="8.15" height="8.1" fill="#4e0cb0"/><rect x="125.44" y="170.34" width="8.15" height="8.1" fill="#540dbe"/><rect x="134.40" y="170.34" width="8.15" height="8.1" fill="#5a0ecc"/><rect x="143.36" y="170.34" width="8.15" height="8.1" fill="#600fda"/><rect x="0.00" y="179.30" width="8.15" height="8.1" fill="#6610e8"/><rect x="8.96" y="179.30" width="8.15" height="8.1" fill="#6c11f5"/><rect x="17.92" y="179.30" width="8.15" height="8.1" fill="#7e2ef6"/><rect x="26.88" y="179.30" width="8.15" height="8.1" fill="#904bf7"/><rect x="35.84" y="179.30" width="8.15" height="8.1" fill="#a268f9"/><rect x="44.80" y="179.30" width="8.15" height="8.1" fill="#b486fa"/><rect x="53.76" y="179.30" width="8.15" height="8.1" fill="#c7a4fb"/><rect x="62.72" y="179.30" width="8.15" height="8.1" fill="#d9c2fc"/><rect x="71.68" y="179.30" width="8.15" height="8.1" fill="#ece0fe"/><rect x="80.64" y="179.30" width="8.15" height="8.1" fill="#ffffff"/><rect x="89.60" y="179.30" width="8.15" height="8.1" fill="#000000"/><rect x="98.56" y="179.30" width="8.15" height="8.1" fill="#1e0324"/><rect x="107.52" y="179.30" width="8.15" height="8.1" fill="#33043c"/><rect x="116.48" y="179.30" width="8.15" height="8.1" fill="#450652"/><rect x="125.44" y="179.30" width="8.15" height="8.1" fill="#550765"/><rect x="134.40" y="179.30" width="8.15" height="8.1" fill="#650878"/><rect x="143.36" y="179.30" width="8.15" height="8.1" fill="#740a89"/><rect x="0.00" y="188.26" width="8.15" height="8.1" fill="#820b9a"/><rect x="8.96" y="188.26" width="8.15" height="8.1" fill="#900caa"/><rect x="17.92" y="188.26" width="8.15" height="8.1" fill="#9d0dba"/><rect x="26.88" y="188.26" width="8.15" height="8.1" fill="#aa0ec9"/><rect x="35.84" y="188.26" width="8.15" height="8.1" fill="#b60fd8"/><rect x="44.80" y="188.26" width="8.15" height="8.1" fill="#c310e7"/><rect x="53.76" y="188.26" width="8.15" height="8.1" fill="#cf11f5"/><rect x="62.72" y="188.26" width="8.15" height="8.1" fill="#d52ef6"/><rect x="71.68" y="188.26" width="8.15" height="8.1" fill="#db4bf7"/><rect x="80.64" y="188.26" width="8.15" height="8.1" fill="#e168f9"/><rect x="89.60" y="188.26" width="8.15" height="8.1" fill="#e786fa"/><rect x="98.56" y="188.26" width="8.15" height="8.1" fill="#eda4fb"/><rect x="107.52" y="188.26" width="8.15" height="8.1" fill="#f3c2fc"/><rect x="116.48" y="188.26" width="8.15" height="8.1" fill="#f9e0fe"/><rect x="125.44" y="188.26" width="8.15" height="8.1" fill="#ffffff"/><rect x="134.40" y="188.26" width="8.15" height="8.1" fill="#000000"/><rect x="143.36" y="188.26" width="8.15" height="8.1" fill="#22021e"/><rect x="0.00" y="197.23" width="8.15" height="8.1" fill="#390432"/><rect x="8.96" y="197.23" width="8.15" height="8.1" fill="#4d0544"/><rect x="17.92" y="197.23" width="8.15" height="8.1" fill="#600754"/><rect x="26.88" y="197.23" width="8.15" height="8.1" fill="#710863"/><rect x="35.84" y="197.23" width="8.15" height="8.1" fill="#820972"/><rect x="44.80" y="197.23" width="8.15" height="8.1" fill="#920a80"/><rect x="53.76" y="197.23" width="8.15" height="8.1" fill="#a10b8d"/><rect x="62.72" y="197.23" width="8.15" height="8.1" fill="#b00c9a"/><rect x="71.68" y="197.23" width="8.15" height="8.1" fill="#be0da7"/><rect x="80.64" y="197.23" width="8.15" height="8.1" fill="#cc0eb3"/><rect x="89.60" y="197.23" width="8.15" height="8.1" fill="#da0fbf"/><rect x="98.56" y="197.23" width="8.15" height="8.1" fill="#e810cb"/><rect x="107.52" y="197.23" width="8.15" height="8.1" fill="#f511d6"/><rect x="116.48" y="197.23" width="8.15" height="8.1" fill="#f62bdb"/><rect x="125.44" y="197.23" width="8.15" height="8.1" fill="#f744df"/><rect x="134.40" y="197.23" width="8.15" height="8.1" fill="#f85ee4"/><rect x="143.36" y="197.23" width="8.15" height="8.1" fill="#f979e8"/><rect x="0.00" y="206.19" width="8.15" height="8.1" fill="#fa93ed"/><rect x="8.96" y="206.19" width="8.15" height="8.1" fill="#fcaef1"/><rect x="17.92" y="206.19" width="8.15" height="8.1" fill="#fdc9f6"/><rect x="26.88" y="206.19" width="8.15" height="8.1" fill="#fee4fa"/><rect x="35.84" y="206.19" width="8.15" height="8.1" fill="#ffffff"/><rect x="44.80" y="206.19" width="8.15" height="8.1" fill="#000000"/><rect x="53.76" y="206.19" width="8.15" height="8.1" fill="#220211"/><rect x="62.72" y="206.19" width="8.15" height="8.1" fill="#39041d"/><rect x="71.68" y="206.19" width="8.15" height="8.1" fill="#4d0527"/><rect x="80.64" y="206.19" width="8.15" height="8.1" fill="#600730"/><rect x="89.60" y="206.19" width="8.15" height="8.1" fill="#710839"/><rect x="98.56" y="206.19" width="8.15" height="8.1" fill="#820941"/><rect x="107.52" y="206.19" width="8.15" height="8.1" fill="#920a49"/><rect x="116.48" y="206.19" width="8.15" height="8.1" fill="#a10b51"/><rect x="125.44" y="206.19" width="8.15" height="8.1" fill="#b00c59"/><rect x="134.40" y="206.19" width="8.15" height="8.1" fill="#be0d60"/><rect x="143.36" y="206.19" width="8.15" height="8.1" fill="#cc0e67"/></svg></div><div style="position:absolute;left:181.5px;top:279px;width:10px;height:213px;background:#3a3a3a"></div><div style="position:absolute;left:181.5px;top:289px;width:10px;height:165px;background:#686868;border-radius:3px"></div><svg style="position:absolute;left:181.5px;top:279px;" width="10" height="10" viewBox="0 0 10 10"><path d="M5 3L7.6 7H2.4Z" fill="#bbb"/></svg><svg style="position:absolute;left:181.5px;top:484px;" width="10" height="10" viewBox="0 0 10 10"><path d="M5 7L7.6 3H2.4Z" fill="#bbb"/></svg><svg style="position:absolute;left:23.4px;top:494.8px;" width="14" height="13.5" viewBox="0 0 14 13.5"><rect width="14" height="13.5" rx="2" fill="#3a3a3a" stroke="#585858" stroke-width="0.7"/><path d="M3.5 2.5H8.5L10.8 4.8V11.2H3.5Z" fill="#555" stroke="#ddd" stroke-width="0.9"/><path d="M8.3 2.6V5H10.6" stroke="#ddd" stroke-width="0.8" fill="none"/></svg><svg style="position:absolute;left:40px;top:494.8px;" width="14" height="13.5" viewBox="0 0 14 13.5"><rect width="14" height="13.5" rx="2" fill="#3a3a3a" stroke="#585858" stroke-width="0.7"/><path d="M3.5 5H10.5V11.3H3.5Z" fill="none" stroke="#ddd" stroke-width="1"/><path d="M2.8 4H11.2M5.4 3.8V2.6H8.6V3.8M5.8 6V10.5M8.2 6V10.5" stroke="#ddd" stroke-width="0.9" fill="none"/></svg><div style="position:absolute;left:57px;top:497px;width:1px;height:9px;background:#555"></div><div class="t" style="left:60px;top:496px;font-size:8px;line-height:10px;color:#8a8a8a;">---</div><div style="position:absolute;left:20px;top:509.5px;width:172px;height:1px;background:#383838"></div><div style="position:absolute;left:20.5px;top:512px;width:35.2px;height:11.5px;background:#474747"></div><div class="t" style="left:22.8px;top:514px;font-size:8px;line-height:10px;color:#9a9a9a;transform-origin:0 0;transform:scaleX(0.83);line-height:9px">Bảng màu</div><div class="t" style="left:59px;top:513.8px;font-size:8px;line-height:10px;color:#c4c4c4;transform-origin:0 0;transform:scaleX(0.84);line-height:9px">Xem trước cọ</div><div style="position:absolute;left:193.6px;top:47.5px;width:2.8px;height:480px;background:#272727"></div><div style="position:absolute;left:196.4px;top:47.5px;width:4.6px;height:480px;background:#3a3a3a"></div><div style="position:absolute;left:372px;top:47.5px;width:446px;height:480px;background:#222"></div><div style="position:absolute;left:372px;top:47.5px;width:446px;height:12px;background:#222"></div><div style="position:absolute;left:372px;top:48px;width:134px;height:11.3px;background:linear-gradient(to bottom,#474747,#323232)"></div><div class="t" style="left:372.5px;top:49px;font-size:7.5px;line-height:9.5px;color:#c0c0c0;line-height:9px">r5+</div><div style="position:absolute;left:373px;top:59.5px;width:431.6px;height:453.6px;background:#fafafa"></div><svg style="position:absolute;left:0;top:0" width="1012" height="538" viewBox="0 0 1012 538"><g fill="none" stroke="#f4bcb5" stroke-width="1.45" stroke-linecap="round" stroke-linejoin="round"><path d="M522.9 290.0C522.9 286.0 522.2 272.7 522.9 266.0C523.6 259.3 525.7 254.6 527.0 250.0C528.3 245.4 530.0 243.3 530.7 238.6C531.4 233.9 531.0 226.9 531.2 222.0C531.4 217.1 531.0 214.6 531.7 209.3C532.4 204.0 534.0 196.9 535.6 190.0C537.2 183.1 539.0 174.0 541.5 167.9C544.0 161.8 546.2 158.8 550.3 153.2C554.4 147.5 560.3 139.5 566.0 134.0C571.7 128.5 579.5 122.7 584.5 120.0C589.5 117.3 592.1 118.1 596.0 117.6C599.9 117.1 602.3 116.7 607.9 117.1C613.5 117.5 621.9 118.4 629.4 120.0C636.9 121.6 645.6 123.5 652.8 126.9C659.9 130.3 667.1 135.3 672.3 140.5C677.5 145.7 680.8 151.9 684.1 158.1C687.4 164.3 689.6 171.0 691.9 177.7C694.2 184.3 696.0 191.1 698.0 198.0C700.0 204.9 702.5 211.2 703.6 219.0C704.7 226.8 704.9 237.3 704.6 244.5C704.3 251.7 702.6 257.1 702.0 262.0C701.4 266.9 701.3 270.5 700.7 273.8C700.1 277.1 699.0 279.8 698.5 282.0C698.0 284.2 697.2 283.8 698.0 287.2C698.8 290.6 701.0 296.8 703.3 302.2C705.6 307.6 711.0 314.0 711.9 319.4C712.8 324.8 710.9 330.3 708.7 334.4C706.6 338.5 702.0 341.2 699.0 344.1C696.0 347.0 691.9 350.4 690.5 351.6"/><path d="M522.9 266.0C522.8 268.3 521.9 275.7 522.0 280.0C522.1 284.3 523.0 288.3 523.5 292.0C524.0 295.7 524.0 297.6 525.0 302.2C526.0 306.8 529.3 314.0 529.3 319.4C529.3 324.8 524.6 329.8 525.0 334.4C525.4 339.0 529.5 344.2 531.5 347.3C533.5 350.4 536.0 351.8 536.9 352.7"/><path d="M558.1 182.0C557.2 184.3 554.1 191.4 553.0 196.0C551.9 200.6 551.4 204.2 551.3 209.3C551.2 214.5 550.4 221.3 552.2 226.9C554.0 232.5 557.6 237.2 562.0 243.0C566.4 248.8 575.8 258.8 578.6 262.0"/><path d="M578.6 262.0C577.3 259.2 573.1 250.5 571.0 245.0C568.9 239.5 566.9 233.5 565.9 228.8C564.9 224.2 565.1 219.1 564.9 217.1"/><path d="M676.3 189.8C676.8 192.3 678.9 200.1 679.5 205.0C680.1 209.9 680.9 214.3 680.2 219.0C679.5 223.7 677.5 228.8 675.5 233.0C673.5 237.2 671.0 239.7 668.4 244.5C665.8 249.3 661.1 259.1 659.6 262.0"/><path d="M659.6 262.0C660.3 259.7 662.9 252.2 664.0 248.0C665.1 243.8 666.0 240.6 666.5 236.6C667.0 232.6 666.9 226.1 667.0 224.0"/><path d="M631.3 121.0C632.3 119.7 635.1 116.1 637.2 113.2C639.3 110.3 642.7 106.3 644.0 103.4C645.3 100.5 646.1 97.5 645.0 95.6C643.9 93.7 640.3 92.3 637.2 92.1C634.1 91.9 629.2 92.7 626.4 94.6C623.6 96.5 621.2 101.0 620.6 103.4C620.0 105.9 622.2 108.3 622.5 109.3"/><path d="M622.5 105.5C623.6 104.7 627.3 101.2 629.4 100.5C631.5 99.8 633.9 100.0 635.2 101.5C636.5 103.0 637.5 106.7 637.2 109.3C636.9 111.9 633.9 115.8 633.3 117.1"/><path d="M559.1 159.1C558.5 158.0 556.2 155.1 555.2 152.3C554.2 149.5 553.1 145.1 553.2 142.5C553.3 139.9 556.0 138.6 556.0 137.0C556.0 135.4 552.9 134.4 553.2 132.7C553.5 131.0 557.4 128.9 558.0 127.0C558.6 125.0 556.1 122.5 557.1 121.0C558.1 119.5 562.4 119.5 564.0 118.0C565.6 116.5 565.4 112.0 566.9 112.2C568.4 112.4 571.2 116.8 572.7 119.1C574.2 121.4 574.9 126.2 575.7 125.9C576.5 125.6 576.5 118.4 577.6 117.1C578.7 115.8 581.4 116.5 582.5 118.1C583.6 119.7 584.8 123.8 584.5 126.9C584.2 130.0 582.8 133.7 580.5 136.6C578.2 139.5 573.9 142.1 570.8 144.5C567.7 146.9 564.0 148.9 562.0 151.3C560.0 153.7 559.6 157.8 559.1 159.1"/><path d="M575.7 125.9C576.2 126.9 578.3 129.8 578.5 132.0C578.7 134.2 577.2 137.8 577.0 139.0"/><path d="M555.5 141.0C556.2 140.5 558.4 138.2 560.0 138.0C561.6 137.8 564.5 138.5 565.0 140.0C565.5 141.5 563.3 145.8 563.0 147.0"/><path d="M601.2 192.0C601.5 193.2 602.3 196.9 603.0 199.0C603.7 201.1 604.1 202.8 605.6 204.3C607.1 205.8 609.7 207.1 612.0 207.8C614.3 208.5 617.1 208.8 619.6 208.7C622.1 208.6 624.8 208.0 627.0 207.0C629.2 206.0 631.3 204.1 632.7 202.6C634.1 201.1 634.8 199.5 635.5 198.0C636.2 196.5 636.8 194.5 637.1 193.8"/><path d="M567.0 197.3C568.2 196.6 571.4 194.2 574.0 193.2C576.6 192.2 579.8 191.5 582.8 191.2C585.8 190.9 589.1 191.1 592.0 191.5C594.9 191.9 598.9 193.4 600.3 193.8"/><path d="M633.0 199.0C634.2 198.2 637.5 195.6 640.0 194.5C642.5 193.4 645.2 192.7 648.0 192.4C650.8 192.2 654.3 192.4 657.0 193.0C659.7 193.6 662.8 195.5 664.0 196.0"/><path d="M569.5 204.0C570.6 203.2 573.4 200.5 576.0 199.5C578.6 198.5 583.5 198.2 585.0 198.0"/><path d="M650.0 198.0C651.5 198.3 656.4 198.8 659.0 200.0C661.6 201.2 664.4 204.6 665.5 205.5"/><path d="M578.6 258.0C580.2 258.5 584.8 260.0 588.0 260.8C591.2 261.6 594.9 262.3 598.1 263.0C601.3 263.7 604.1 264.6 607.0 265.2C609.9 265.8 612.5 267.1 615.7 266.9C618.9 266.7 622.4 264.9 626.0 263.8C629.6 262.7 633.4 261.3 637.2 260.0C641.0 258.7 645.1 257.2 649.0 255.8C652.9 254.4 658.7 252.1 660.6 251.3"/><path d="M616.7 227.9C617.2 228.7 619.5 231.1 619.6 232.7C619.7 234.3 617.7 236.8 617.3 237.6"/><path d="M611.8 248.4C612.6 248.3 614.9 247.6 616.5 247.6C618.1 247.6 621.1 247.4 621.6 248.4C622.1 249.4 620.5 252.4 619.5 253.5C618.5 254.6 616.8 255.3 615.7 255.2C614.6 255.1 613.6 253.9 613.0 252.8C612.4 251.7 612.0 249.1 611.8 248.4"/><path d="M602.0 264.0C602.2 265.0 603.1 267.8 603.2 270.0C603.3 272.2 602.5 276.2 602.4 277.5"/><path d="M631.3 264.0C631.0 265.0 629.4 267.9 629.4 270.0C629.4 272.1 631.1 275.3 631.4 276.4"/><path d="M602.4 277.5C599.0 278.8 589.0 282.8 582.0 285.5C575.0 288.2 566.6 291.4 560.5 293.6C554.4 295.9 548.8 295.8 545.4 299.0C542.0 302.2 541.2 307.0 540.0 313.0C538.8 319.0 538.5 327.9 538.0 335.0C537.5 342.1 537.3 349.2 536.9 355.9C536.5 362.6 535.8 367.5 535.8 375.0C535.8 382.5 536.3 394.1 536.9 400.8C537.5 407.5 538.4 410.5 539.5 415.0C540.6 419.5 542.7 425.5 543.3 427.6"/><path d="M631.4 276.4C634.5 277.9 643.7 282.4 650.0 285.5C656.3 288.6 663.0 291.6 669.0 294.7C675.0 297.8 682.8 299.6 686.2 304.4C689.6 309.2 688.9 315.1 689.4 323.7C689.9 332.3 689.6 347.3 689.4 355.9C689.2 364.4 688.3 367.9 688.3 375.0C688.3 382.1 689.9 392.2 689.4 398.6C688.9 405.1 685.8 411.2 685.1 413.7"/><path d="M560.5 293.6C560.7 295.0 561.0 299.3 561.5 302.0C562.0 304.7 562.6 307.4 563.7 309.7C564.8 312.0 566.2 314.2 568.0 316.0C569.8 317.8 571.9 319.6 574.4 320.5C576.9 321.4 581.1 320.5 583.0 321.6C584.9 322.7 584.9 325.2 586.0 327.0C587.1 328.8 588.0 330.5 589.5 332.3C591.0 334.1 592.9 336.2 595.0 338.0C597.1 339.8 599.4 341.4 602.4 343.0C605.4 344.6 611.3 346.6 613.1 347.3"/><path d="M669.0 294.7C669.1 295.9 669.8 299.5 669.8 302.0C669.8 304.5 669.7 307.5 669.0 309.7C668.3 311.9 666.9 313.4 665.5 315.0C664.1 316.6 663.0 317.9 660.4 319.4C657.8 320.8 651.7 322.3 649.6 323.7C647.5 325.1 648.4 326.6 648.0 328.0C647.6 329.4 648.4 330.6 647.5 332.3C646.6 334.0 644.3 336.2 642.5 338.0C640.7 339.8 639.6 341.3 636.7 343.0C633.8 344.7 626.9 347.5 624.9 348.4"/><path d="M613.1 343.5C614.1 343.2 617.0 341.9 619.0 342.0C621.0 342.1 624.0 342.6 624.9 344.0C625.8 345.4 625.5 348.9 624.5 350.5C623.5 352.1 620.8 353.6 619.0 353.8C617.2 354.0 614.8 353.2 613.8 351.5C612.8 349.8 613.2 344.8 613.1 343.5"/><path d="M611.0 352.7C610.6 354.4 609.0 359.6 608.5 363.0C608.0 366.4 607.7 369.6 607.7 373.1C607.7 376.6 608.8 380.3 608.6 384.0C608.4 387.7 605.5 393.6 606.7 395.4C607.9 397.1 612.8 395.0 616.0 394.5C619.2 394.0 624.1 394.3 626.0 392.2C627.9 390.1 627.4 385.2 627.6 382.0C627.8 378.8 627.6 376.3 627.1 373.1C626.6 369.9 625.4 366.2 624.5 363.0C623.6 359.8 622.2 355.3 621.7 353.8"/><path d="M624.9 350.6C626.2 351.2 630.3 352.9 633.0 354.5C635.7 356.1 638.8 358.2 641.0 360.2C643.2 362.2 645.4 364.4 646.5 366.5C647.6 368.6 647.7 370.7 647.5 373.1C647.3 375.5 646.4 378.9 645.3 381.0C644.2 383.1 641.7 384.9 641.0 385.7"/><path d="M623.9 364.5C625.1 365.9 629.0 370.4 631.0 373.0C633.0 375.6 634.3 377.9 636.0 380.0C637.7 382.1 640.2 384.8 641.0 385.7"/><path d="M574.4 338.7C574.2 342.3 573.2 354.1 573.4 360.2C573.6 366.2 574.6 367.5 575.5 375.0C576.4 382.5 579.1 398.0 578.7 405.0C578.3 412.0 575.1 413.2 573.0 417.0C570.9 420.8 567.1 425.8 565.9 427.6"/><path d="M663.6 338.7C664.0 342.6 665.5 355.5 665.7 362.4C665.9 369.3 664.9 373.6 664.7 380.0C664.5 386.4 663.5 396.1 664.7 400.8C665.9 405.6 669.5 406.2 672.0 408.5C674.5 410.8 678.4 413.7 679.7 414.7"/><path d="M577.7 387.9C580.9 388.3 590.4 389.8 597.0 390.3C603.6 390.8 610.2 391.4 617.4 391.1C624.6 390.9 632.3 389.9 640.0 388.8C647.7 387.7 659.7 385.4 663.6 384.7"/><path d="M579.8 404.0C582.8 404.7 591.7 407.1 598.0 408.0C604.3 408.9 610.2 409.7 617.4 409.4C624.6 409.1 633.1 407.6 641.0 406.2C648.9 404.8 660.8 401.7 664.7 400.8"/><path d="M579.8 404.0C578.8 406.1 576.0 412.4 574.0 416.5C572.0 420.6 570.2 422.9 568.0 428.7C565.8 434.4 563.3 443.5 561.0 451.0C558.7 458.5 555.2 470.0 554.0 473.8"/><path d="M664.7 400.8C666.0 402.7 670.0 408.1 672.5 412.0C675.0 415.9 677.2 418.7 679.7 424.4C682.2 430.1 685.0 438.8 687.5 446.0C690.0 453.2 693.5 463.8 694.7 467.4"/><path d="M684.0 418.0C685.7 421.2 690.8 430.9 694.0 437.0C697.2 443.1 703.2 449.4 703.3 454.5C703.4 459.6 696.1 465.2 694.7 467.4"/><path d="M554.0 473.8C554.9 474.2 557.5 475.8 559.5 476.5C561.5 477.2 563.3 477.8 565.9 478.1C568.5 478.5 572.0 478.5 575.0 478.6C578.0 478.7 582.6 478.5 584.1 478.5"/><path d="M598.1 479.6C599.7 479.9 604.3 480.8 607.5 481.2C610.7 481.6 614.0 481.8 617.4 481.8C620.8 481.8 624.5 481.6 628.0 481.4C631.5 481.1 636.8 480.5 638.5 480.3"/><path d="M660.4 478.1C662.0 477.9 666.8 477.3 670.0 476.8C673.2 476.3 676.8 475.8 679.7 474.9C682.6 474.0 685.0 472.8 687.5 471.5C690.0 470.2 693.5 468.1 694.7 467.4"/><path d="M545.4 435.2C545.6 437.7 545.8 445.9 546.5 450.2C547.2 454.5 549.5 458.6 549.7 460.9C549.9 463.2 548.4 463.3 547.5 464.0C546.6 464.7 545.6 465.3 544.4 465.2C543.2 465.1 540.8 463.5 540.1 463.1"/><path d="M553.0 452.3C552.8 453.9 552.0 458.8 551.6 462.0C551.2 465.2 551.3 470.4 550.8 471.7C550.3 472.9 549.0 469.9 548.6 469.5"/><path d="M577.5 193.0 L591.5 163.5 L601.2 192.0"/><path d="M637.1 193.8 L642.6 164.5 L663.4 195.6"/><path d="M595.9 280.7 L617.4 343.0"/><path d="M638.9 281.8 L619.6 343.0"/><path d="M562.6 294.7 L615.3 340.9"/><path d="M666.8 295.8 L620.6 342.0"/><path d="M607.7 310.8 L619.6 304.4 L630.3 309.7"/><path d="M543.3 427.6 L565.9 427.6"/><path d="M542.2 433.0 L563.7 433.4"/><path d="M543.3 427.6 L542.2 433.0"/><path d="M678.6 413.7 L685.1 414.7"/><path d="M584.1 478.5 L594.9 435.2 L598.1 479.6"/><path d="M638.5 480.3 L641.0 434.1 L660.4 478.1"/><ellipse cx="585.6" cy="216.6" rx="12.5" ry="13"/><ellipse cx="647.8" cy="216.6" rx="13.2" ry="13.6"/></g><g fill="none" stroke="#f8dbd7" stroke-width="1.2" stroke-linecap="round"><path d="M591.0 129.0C592.2 128.7 596.3 126.5 598.1 127.0C599.9 127.5 602.0 129.9 602.0 131.8C602.0 133.7 598.8 137.5 598.1 138.6"/><path d="M559.1 158.1C561.7 155.8 569.6 147.5 574.7 144.5C579.9 141.5 584.5 141.0 590.0 140.0C595.5 139.0 601.2 138.8 607.9 138.6C614.6 138.4 623.5 138.6 630.0 139.0C636.5 139.4 640.0 137.8 647.0 141.0C654.0 144.2 668.1 155.2 672.3 158.1"/><path d="M545.0 170.0C544.3 174.2 541.8 185.8 541.0 195.0C540.2 204.2 540.2 220.0 540.0 225.0"/><path d="M683.0 170.0C684.2 175.0 688.3 189.2 690.0 200.0C691.7 210.8 692.5 229.2 693.0 235.0"/><path d="M609.0 187.0 L609.5 203.0"/><path d="M612.5 187.0 L613.0 203.0"/><path d="M616.0 187.0 L616.5 203.0"/><path d="M619.5 187.0 L620.0 203.0"/><path d="M623.0 187.0 L623.5 203.0"/><path d="M626.5 187.0 L627.0 203.0"/><path d="M630.0 187.0 L630.5 203.0"/><path d="M585.2 469.5C586.2 469.8 589.0 471.0 591.0 471.5C593.0 472.0 596.0 472.5 597.0 472.7"/><path d="M640.0 475.0C641.5 474.9 646.0 474.8 649.0 474.6C652.0 474.4 656.7 473.9 658.2 473.8"/><path d="M514.3 313.0C513.8 315.5 511.8 322.7 511.5 328.0C511.2 333.3 512.3 342.2 512.5 345.0"/><path d="M720.5 340.9C720.9 344.1 722.3 353.9 723.0 360.0C723.7 366.1 724.5 374.5 724.8 377.4"/><path d="M540.0 275.0C539.6 277.0 537.3 283.2 537.5 287.0C537.7 290.8 540.4 296.2 541.0 298.0"/><path d="M706.0 290.0C707.3 292.5 711.8 299.2 714.0 305.0C716.2 310.8 717.9 319.0 719.0 325.0C720.1 331.0 720.2 338.2 720.5 340.9"/><path d="M550.0 262.0C549.6 264.2 547.3 270.3 547.5 275.0C547.7 279.7 550.4 287.5 551.0 290.0"/><path d="M570.0 262.0C569.4 264.2 566.8 270.8 566.5 275.0C566.2 279.2 567.8 285.0 568.0 287.0"/><path d="M672.0 265.0C672.5 267.2 674.9 273.8 675.0 278.0C675.1 282.2 672.9 288.0 672.5 290.0"/><path d="M687.0 262.0C687.4 264.3 689.3 271.3 689.5 276.0C689.7 280.7 688.2 287.7 688.0 290.0"/><path d="M538.0 215.0C537.7 219.2 537.0 232.2 536.0 240.0C535.0 247.8 532.7 258.3 532.0 262.0"/><path d="M697.0 215.0C697.2 219.2 698.8 232.2 698.5 240.0C698.2 247.8 696.0 258.3 695.5 262.0"/></g><g font-family="Liberation Sans,sans-serif" font-style="italic" fill="#f2bab5" stroke="#f2bab5" stroke-width="0.5" font-size="17"><text x="701.6" y="85" textLength="63.5" lengthAdjust="spacingAndGlyphs">TROLAI1</text><text x="715.6" y="103" textLength="52" lengthAdjust="spacingAndGlyphs">HD247</text></g></svg><div style="position:absolute;left:804.6px;top:59.5px;width:10.4px;height:454px;background:#353535"></div><div style="position:absolute;left:805.5px;top:231px;width:9px;height:107px;background:#666;border-radius:3px"></div><svg style="position:absolute;left:805px;top:60px;" width="10" height="8" viewBox="0 0 10 8"><path d="M5 2L7.4 6H2.6Z" fill="#ccc"/></svg><svg style="position:absolute;left:805px;top:505px;" width="10" height="8" viewBox="0 0 10 8"><path d="M5 6L7.4 2H2.6Z" fill="#ccc"/></svg><div style="position:absolute;left:373px;top:513.1px;width:442px;height:11.4px;background:#353535"></div><div style="position:absolute;left:394.4px;top:514.4px;width:148px;height:9.4px;background:linear-gradient(to bottom,#787878,#5c5c5c);border-radius:3px"></div><svg style="position:absolute;left:806px;top:514.5px;" width="8" height="9" viewBox="0 0 8 9"><path d="M6 4.5L2 2V7Z" fill="#ccc"/></svg><div style="position:absolute;left:815px;top:47.5px;width:2.8px;height:480px;background:#1d1d1d"></div><div style="position:absolute;left:199.3px;top:47px;width:172.5px;height:475px;background:#2a2a2a;border-radius:3px 3px 0 0"></div><div style="position:absolute;left:199.3px;top:47px;width:172.5px;height:20px;background:#fff;border-radius:3px 3px 0 0"></div><div class="t" style="left:204.2px;top:51.5px;font-size:8.5px;line-height:10.5px;color:#a6a6a6;transform-origin:0 0;transform:scaleX(0.9);">Cọ: Pencil</div><div style="position:absolute;left:359.3px;top:50.8px;width:13px;height:13.4px;background:#e2e2e2"></div><div style="position:absolute;left:199.3px;top:67px;width:1.8px;height:436px;background:#1c1c1c"></div><div style="position:absolute;left:201px;top:67.5px;width:159.5px;height:435.5px;background:#484848;overflow:hidden"></div><div style="position:absolute;left:201px;top:67.8px;width:159.5px;height:12.2px;background:#4e98d2"></div><div style="position:absolute;left:202.8px;top:69.6px;width:9px;height:8.8px;background:#22282c"></div><div class="t" style="left:215px;top:68.1px;font-size:9.5px;line-height:11.5px;color:#d78aa6;transform-origin:0 0;transform:scaleX(0.9);line-height:11px">12</div><div class="t" style="left:235.7px;top:67.9px;font-size:9.8px;line-height:11.8px;color:#fff;transform-origin:0 0;transform:scaleX(0.88);line-height:12px;font-weight:bold">Pencil</div><div style="position:absolute;left:201px;top:81.0px;width:159.5px;height:12.2px;background:#585858"></div><div style="position:absolute;left:202.8px;top:82.8px;width:9px;height:8.8px;background:#2b2b2b"></div><div class="t" style="left:215px;top:81.3px;font-size:9.5px;line-height:11.5px;color:#f0f0f0;transform-origin:0 0;transform:scaleX(0.9);line-height:11px">8</div><div class="t" style="left:235.7px;top:81.3px;font-size:9.5px;line-height:11.5px;color:#f0f0f0;transform-origin:0 0;transform:scaleX(0.885);line-height:11px">Pen</div><div style="position:absolute;left:201px;top:94.2px;width:159.5px;height:12.2px;background:#585858"></div><div style="position:absolute;left:202.8px;top:96.0px;width:9px;height:8.8px;background:#2b2e30"></div><div class="t" style="left:215px;top:94.5px;font-size:9.5px;line-height:11.5px;color:#f0f0f0;transform-origin:0 0;transform:scaleX(0.9);line-height:11px">8</div><div class="t" style="left:235.7px;top:94.5px;font-size:9.5px;line-height:11.5px;color:#f0f0f0;transform-origin:0 0;transform:scaleX(0.885);line-height:11px">Pen (Sharp)</div><div style="position:absolute;left:201px;top:107.4px;width:159.5px;height:12.2px;background:#585858"></div><div style="position:absolute;left:202.8px;top:109.2px;width:9px;height:8.8px;background:#f23434"></div><div class="t" style="left:215px;top:107.7px;font-size:9.5px;line-height:11.5px;color:#f0f0f0;transform-origin:0 0;transform:scaleX(0.9);line-height:11px">10</div><div class="t" style="left:235.7px;top:107.7px;font-size:9.5px;line-height:11.5px;color:#f0f0f0;transform-origin:0 0;transform:scaleX(0.885);line-height:11px">G Pen</div><div style="position:absolute;left:201px;top:120.6px;width:159.5px;height:12.2px;background:#585858"></div><div style="position:absolute;left:202.8px;top:122.4px;width:9px;height:8.8px;background:#f23434"></div><div class="t" style="left:215px;top:120.9px;font-size:9.5px;line-height:11.5px;color:#f0f0f0;transform-origin:0 0;transform:scaleX(0.9);line-height:11px">8</div><div class="t" style="left:235.7px;top:120.9px;font-size:9.5px;line-height:11.5px;color:#f0f0f0;transform-origin:0 0;transform:scaleX(0.885);line-height:11px">Mapping Pen</div><div style="position:absolute;left:201px;top:133.8px;width:159.5px;height:12.2px;background:#585858"></div><div style="position:absolute;left:202.8px;top:135.6px;width:9px;height:8.8px;background:#22b41e"></div><div class="t" style="left:215px;top:134.1px;font-size:9.5px;line-height:11.5px;color:#f0f0f0;transform-origin:0 0;transform:scaleX(0.9);line-height:11px">20</div><div class="t" style="left:235.7px;top:134.1px;font-size:9.5px;line-height:11.5px;color:#f0f0f0;transform-origin:0 0;transform:scaleX(0.885);line-height:11px">Edge Pen</div><div style="position:absolute;left:201px;top:147.0px;width:159.5px;height:12.2px;background:#585858"></div><div style="position:absolute;left:202.8px;top:148.8px;width:9px;height:8.8px;background:#f4e12a"></div><div class="t" style="left:215px;top:147.3px;font-size:9.5px;line-height:11.5px;color:#f0f0f0;transform-origin:0 0;transform:scaleX(0.9);line-height:11px">50</div><div class="t" style="left:235.7px;top:147.3px;font-size:9.5px;line-height:11.5px;color:#f0f0f0;transform-origin:0 0;transform:scaleX(0.885);line-height:11px">Stipple Pen</div><div style="position:absolute;left:201px;top:160.2px;width:159.5px;height:12.2px;background:#585858"></div><div style="position:absolute;left:202.8px;top:162.0px;width:9px;height:8.8px;background:#f4e12a"></div><div class="t" style="left:215px;top:160.5px;font-size:9.5px;line-height:11.5px;color:#f0f0f0;transform-origin:0 0;transform:scaleX(0.9);line-height:11px">30</div><div class="t" style="left:235.7px;top:160.5px;font-size:9.5px;line-height:11.5px;color:#f0f0f0;transform-origin:0 0;transform:scaleX(0.885);line-height:11px">Sumi</div><div style="position:absolute;left:201px;top:173.4px;width:159.5px;height:12.2px;background:#585858"></div><div style="position:absolute;left:202.8px;top:175.2px;width:9px;height:8.8px;background:#86dcfb"></div><div class="t" style="left:215px;top:173.7px;font-size:9.5px;line-height:11.5px;color:#f0f0f0;transform-origin:0 0;transform:scaleX(0.9);line-height:11px">50</div><div class="t" style="left:235.7px;top:173.7px;font-size:9.5px;line-height:11.5px;color:#f0f0f0;transform-origin:0 0;transform:scaleX(0.885);line-height:11px">Watercolor</div><div style="position:absolute;left:201px;top:186.6px;width:159.5px;height:12.2px;background:#585858"></div><div style="position:absolute;left:202.8px;top:188.4px;width:9px;height:8.8px;background:#86dcfb"></div><div class="t" style="left:215px;top:186.9px;font-size:9.5px;line-height:11.5px;color:#f0f0f0;transform-origin:0 0;transform:scaleX(0.9);line-height:11px">100</div><div class="t" style="left:235.7px;top:186.9px;font-size:9.5px;line-height:11.5px;color:#f0f0f0;transform-origin:0 0;transform:scaleX(0.885);line-height:11px">Watercolor (Wet)</div><div style="position:absolute;left:201px;top:199.8px;width:159.5px;height:12.2px;background:#585858"></div><div style="position:absolute;left:202.8px;top:201.6px;width:9px;height:8.8px;background:#f4e12a"></div><div class="t" style="left:215px;top:200.1px;font-size:9.5px;line-height:11.5px;color:#f0f0f0;transform-origin:0 0;transform:scaleX(0.9);line-height:11px">50</div><div class="t" style="left:235.7px;top:200.1px;font-size:9.5px;line-height:11.5px;color:#f0f0f0;transform-origin:0 0;transform:scaleX(0.885);line-height:11px">Acrylic</div><div style="position:absolute;left:201px;top:213.0px;width:159.5px;height:12.2px;background:#585858"></div><div style="position:absolute;left:202.8px;top:214.8px;width:9px;height:8.8px;background:#d2d2dc"></div><div class="t" style="left:215px;top:213.3px;font-size:9.5px;line-height:11.5px;color:#f0f0f0;transform-origin:0 0;transform:scaleX(0.9);line-height:11px">100</div><div class="t" style="left:235.7px;top:213.3px;font-size:9.5px;line-height:11.5px;color:#f0f0f0;transform-origin:0 0;transform:scaleX(0.885);line-height:11px">Airbrush</div><div style="position:absolute;left:201px;top:226.2px;width:159.5px;height:12.2px;background:#585858"></div><div style="position:absolute;left:202.8px;top:228.0px;width:9px;height:8.8px;background:#fba4f4"></div><div class="t" style="left:215px;top:226.5px;font-size:9.5px;line-height:11.5px;color:#f0f0f0;transform-origin:0 0;transform:scaleX(0.9);line-height:11px">50</div><div class="t" style="left:235.7px;top:226.5px;font-size:9.5px;line-height:11.5px;color:#f0f0f0;transform-origin:0 0;transform:scaleX(0.885);line-height:11px">Blur</div><div style="position:absolute;left:201px;top:239.4px;width:159.5px;height:12.2px;background:#585858"></div><div style="position:absolute;left:202.8px;top:241.2px;width:9px;height:8.8px;background:#fbe2c4"></div><div class="t" style="left:215px;top:239.7px;font-size:9.5px;line-height:11.5px;color:#f0f0f0;transform-origin:0 0;transform:scaleX(0.9);line-height:11px">70</div><div class="t" style="left:235.7px;top:239.7px;font-size:9.5px;line-height:11.5px;color:#f0f0f0;transform-origin:0 0;transform:scaleX(0.885);line-height:11px">Smudge</div><div style="position:absolute;left:201px;top:252.6px;width:159.5px;height:12.2px;background:#585858"></div><div style="position:absolute;left:202.8px;top:254.4px;width:9px;height:8.8px;background:#3456f4"></div><div class="t" style="left:215px;top:252.9px;font-size:9.5px;line-height:11.5px;color:#f0f0f0;transform-origin:0 0;transform:scaleX(0.9);line-height:11px">100</div><div class="t" style="left:235.7px;top:252.9px;font-size:9.5px;line-height:11.5px;color:#f0f0f0;transform-origin:0 0;transform:scaleX(0.885);line-height:11px">Sparkle Brush</div><div style="position:absolute;left:201px;top:265.8px;width:159.5px;height:12.2px;background:#585858"></div><div style="position:absolute;left:202.8px;top:267.6px;width:9px;height:8.8px;background:#f23434"></div><div class="t" style="left:215px;top:266.1px;font-size:9.5px;line-height:11.5px;color:#f0f0f0;transform-origin:0 0;transform:scaleX(0.9);line-height:11px">8</div><div class="t" style="left:235.7px;top:266.1px;font-size:9.5px;line-height:11.5px;color:#f0f0f0;transform-origin:0 0;transform:scaleX(0.885);line-height:11px">Rotation Symmetry Pen</div><div style="position:absolute;left:201px;top:279.0px;width:159.5px;height:12.2px;background:#585858"></div><div style="position:absolute;left:202.8px;top:280.8px;width:9px;height:8.8px;background:#ffffff"></div><div class="t" style="left:215px;top:279.3px;font-size:9.5px;line-height:11.5px;color:#f0f0f0;transform-origin:0 0;transform:scaleX(0.9);line-height:11px">50</div><div class="t" style="left:235.7px;top:279.3px;font-size:9.5px;line-height:11.5px;color:#f0f0f0;transform-origin:0 0;transform:scaleX(0.885);line-height:11px">Eraser (Soft)</div><div style="position:absolute;left:201px;top:292.2px;width:159.5px;height:12.2px;background:#585858"></div><div style="position:absolute;left:202.8px;top:294.0px;width:9px;height:8.8px;background:#ffffff"></div><div class="t" style="left:215px;top:292.5px;font-size:9.5px;line-height:11.5px;color:#d98a8f;transform-origin:0 0;transform:scaleX(0.9);line-height:11px">300</div><div class="t" style="left:235.7px;top:292.5px;font-size:9.5px;line-height:11.5px;color:#f0f0f0;transform-origin:0 0;transform:scaleX(0.885);line-height:11px">Eraser</div><div style="position:absolute;left:201px;top:305.4px;width:159.5px;height:12.2px;background:#585858"></div><div style="position:absolute;left:202.8px;top:307.2px;width:9px;height:8.8px;background:#2b2b2b"></div><div class="t" style="left:215px;top:305.7px;font-size:9.5px;line-height:11.5px;color:#f0f0f0;transform-origin:0 0;transform:scaleX(0.9);line-height:11px">10</div><div class="t" style="left:235.7px;top:305.7px;font-size:9.5px;line-height:11.5px;color:#f0f0f0;transform-origin:0 0;transform:scaleX(0.885);line-height:11px">NONAME</div><div style="position:absolute;left:201px;top:318.6px;width:159.5px;height:12.2px;background:#585858"></div><div style="position:absolute;left:202.8px;top:320.4px;width:9px;height:8.8px;background:#d2d2dc"></div><div class="t" style="left:215px;top:318.9px;font-size:9.5px;line-height:11.5px;color:#f0f0f0;transform-origin:0 0;transform:scaleX(0.9);line-height:11px">1000</div><div class="t" style="left:235.7px;top:318.9px;font-size:9.5px;line-height:11.5px;color:#f0f0f0;transform-origin:0 0;transform:scaleX(0.885);line-height:11px">má hồng</div><div style="position:absolute;left:201px;top:331.8px;width:159.5px;height:12.2px;background:#585858"></div><div style="position:absolute;left:202.8px;top:333.6px;width:9px;height:8.8px;background:#f4e12a"></div><div class="t" style="left:215px;top:332.1px;font-size:9.5px;line-height:11.5px;color:#f0f0f0;transform-origin:0 0;transform:scaleX(0.9);line-height:11px">613</div><div class="t" style="left:235.7px;top:332.1px;font-size:9.5px;line-height:11.5px;color:#f0f0f0;transform-origin:0 0;transform:scaleX(0.885);line-height:11px">mầm</div><div style="position:absolute;left:201px;top:345.0px;width:159.5px;height:12.2px;background:#585858"></div><div style="position:absolute;left:202.8px;top:346.8px;width:9px;height:8.8px;background:#86dcfb"></div><div class="t" style="left:215px;top:345.3px;font-size:9.5px;line-height:11.5px;color:#f0f0f0;transform-origin:0 0;transform:scaleX(0.9);line-height:11px">582</div><div class="t" style="left:235.7px;top:345.3px;font-size:9.5px;line-height:11.5px;color:#f0f0f0;transform-origin:0 0;transform:scaleX(0.885);line-height:11px">tuyhrhthfhfyy</div><div style="position:absolute;left:201px;top:358.2px;width:159.5px;height:12.2px;background:#585858"></div><div style="position:absolute;left:202.8px;top:360.0px;width:9px;height:8.8px;background:#3456f4"></div><div class="t" style="left:215px;top:358.5px;font-size:9.5px;line-height:11.5px;color:#f0f0f0;transform-origin:0 0;transform:scaleX(0.9);line-height:11px">1000</div><div class="t" style="left:235.7px;top:358.5px;font-size:9.5px;line-height:11.5px;color:#f0f0f0;transform-origin:0 0;transform:scaleX(0.885);line-height:11px">Hoa hồng</div><div style="position:absolute;left:201px;top:371.4px;width:159.5px;height:12.2px;background:#585858"></div><div style="position:absolute;left:202.8px;top:373.2px;width:9px;height:8.8px;background:#fba41a"></div><div class="t" style="left:215px;top:371.7px;font-size:9.5px;line-height:11.5px;color:#f0f0f0;transform-origin:0 0;transform:scaleX(0.9);line-height:11px">545</div><div class="t" style="left:235.7px;top:371.7px;font-size:9.5px;line-height:11.5px;color:#f0f0f0;transform-origin:0 0;transform:scaleX(0.885);line-height:11px">Rainbow</div><div style="position:absolute;left:201px;top:384.6px;width:159.5px;height:12.2px;background:#585858"></div><div style="position:absolute;left:202.8px;top:386.4px;width:9px;height:8.8px;background:#3456f4"></div><div class="t" style="left:215px;top:384.9px;font-size:9.5px;line-height:11.5px;color:#f0f0f0;transform-origin:0 0;transform:scaleX(0.9);line-height:11px">758</div><div class="t" style="left:235.7px;top:384.9px;font-size:9.5px;line-height:11.5px;color:#f0f0f0;transform-origin:0 0;transform:scaleX(0.885);line-height:11px">star</div><div style="position:absolute;left:201px;top:397.8px;width:159.5px;height:12.2px;background:#585858"></div><div style="position:absolute;left:202.8px;top:399.6px;width:9px;height:8.8px;background:#f4e12a"></div><div class="t" style="left:215px;top:398.1px;font-size:9.5px;line-height:11.5px;color:#f0f0f0;transform-origin:0 0;transform:scaleX(0.9);line-height:11px">590</div><div class="t" style="left:235.7px;top:398.1px;font-size:9.5px;line-height:11.5px;color:#f0f0f0;transform-origin:0 0;transform:scaleX(0.885);line-height:11px">mầm cute</div><div style="position:absolute;left:201px;top:411.0px;width:159.5px;height:12.2px;background:#585858"></div><div style="position:absolute;left:202.8px;top:412.8px;width:9px;height:8.8px;background:#f4e12a"></div><div class="t" style="left:215px;top:411.3px;font-size:9.5px;line-height:11.5px;color:#f0f0f0;transform-origin:0 0;transform:scaleX(0.9);line-height:11px">592</div><div class="t" style="left:235.7px;top:411.3px;font-size:9.5px;line-height:11.5px;color:#f0f0f0;transform-origin:0 0;transform:scaleX(0.885);line-height:11px">2021_12_18_0no_Kleki</div><div style="position:absolute;left:201px;top:424.2px;width:159.5px;height:12.2px;background:#585858"></div><div style="position:absolute;left:202.8px;top:426.0px;width:9px;height:8.8px;background:#f4e12a"></div><div class="t" style="left:215px;top:424.5px;font-size:9.5px;line-height:11.5px;color:#e09a92;transform-origin:0 0;transform:scaleX(0.9);line-height:11px">700</div><div class="t" style="left:235.7px;top:424.5px;font-size:9.5px;line-height:11.5px;color:#f0f0f0;transform-origin:0 0;transform:scaleX(0.885);line-height:11px">From Canvas</div><div style="position:absolute;left:201px;top:437.4px;width:159.5px;height:12.2px;background:#585858"></div><div style="position:absolute;left:202.8px;top:439.2px;width:9px;height:8.8px;background:#b428f4"></div><div class="t" style="left:215px;top:437.7px;font-size:9.5px;line-height:11.5px;color:#f0f0f0;transform-origin:0 0;transform:scaleX(0.9);line-height:11px">70</div><div class="t" style="left:235.7px;top:437.7px;font-size:9.5px;line-height:11.5px;color:#f0f0f0;transform-origin:0 0;transform:scaleX(0.885);line-height:11px">Screenshot (361)</div><div style="position:absolute;left:201px;top:450.6px;width:159.5px;height:12.2px;background:#585858"></div><div style="position:absolute;left:202.8px;top:452.4px;width:9px;height:8.8px;background:#3456f4"></div><div class="t" style="left:215px;top:450.9px;font-size:9.5px;line-height:11.5px;color:#f0f0f0;transform-origin:0 0;transform:scaleX(0.9);line-height:11px">655</div><div class="t" style="left:235.7px;top:450.9px;font-size:9.5px;line-height:11.5px;color:#f0f0f0;transform-origin:0 0;transform:scaleX(0.885);line-height:11px">Hoa hồng</div><div style="position:absolute;left:201px;top:463.8px;width:159.5px;height:12.2px;background:#585858"></div><div style="position:absolute;left:202.8px;top:465.6px;width:9px;height:8.8px;background:#dcdcdc"></div><div class="t" style="left:215px;top:464.1px;font-size:9.5px;line-height:11.5px;color:#f0f0f0;transform-origin:0 0;transform:scaleX(0.9);line-height:11px">1000</div><div class="t" style="left:235.7px;top:464.1px;font-size:9.5px;line-height:11.5px;color:#f0f0f0;transform-origin:0 0;transform:scaleX(0.885);line-height:11px">má hồng</div><div style="position:absolute;left:201px;top:477.0px;width:159.5px;height:12.2px;background:#585858"></div><div style="position:absolute;left:202.8px;top:478.8px;width:9px;height:8.8px;background:#dcdcdc"></div><div class="t" style="left:215px;top:477.3px;font-size:9.5px;line-height:11.5px;color:#f0f0f0;transform-origin:0 0;transform:scaleX(0.9);line-height:11px">1000</div><div class="t" style="left:235.7px;top:477.3px;font-size:9.5px;line-height:11.5px;color:#f0f0f0;transform-origin:0 0;transform:scaleX(0.885);line-height:11px">má hồng</div><div style="position:absolute;left:201px;top:490.2px;width:159.5px;height:12.2px;background:#585858"></div><div style="position:absolute;left:202.8px;top:492.0px;width:9px;height:8.8px;background:#3456f4"></div><div class="t" style="left:215px;top:490.5px;font-size:9.5px;line-height:11.5px;color:#f0f0f0;transform-origin:0 0;transform:scaleX(0.9);line-height:11px">1000</div><div class="t" style="left:235.7px;top:490.5px;font-size:9.5px;line-height:11.5px;color:#f0f0f0;transform-origin:0 0;transform:scaleX(0.885);line-height:11px">hoa cúc</div><svg style="position:absolute;left:350.6px;top:70px;" width="8.4" height="8.4" viewBox="0 0 8.4 8.4"><rect x="3.28" y="0" width="1.85" height="8.40" transform="rotate(0 4.2 4.2)" fill="#fff"/><rect x="3.28" y="0" width="1.85" height="8.40" transform="rotate(45 4.2 4.2)" fill="#fff"/><rect x="3.28" y="0" width="1.85" height="8.40" transform="rotate(90 4.2 4.2)" fill="#fff"/><rect x="3.28" y="0" width="1.85" height="8.40" transform="rotate(135 4.2 4.2)" fill="#fff"/><circle cx="4.2" cy="4.2" r="3.11" fill="#fff"/><circle cx="4.2" cy="4.2" r="1.34" fill="#4e98d2"/></svg><div style="position:absolute;left:361.5px;top:67.5px;width:9.5px;height:435.5px;background:#383838"></div><div style="position:absolute;left:362px;top:73.5px;width:8.5px;height:76px;background:#6a6a6a;border-radius:3px"></div><svg style="position:absolute;left:361.5px;top:66.5px;" width="9.5" height="8" viewBox="0 0 9.5 8"><path d="M4.75 2L7 6H2.5Z" fill="#ccc"/></svg><svg style="position:absolute;left:361.5px;top:494.5px;" width="9.5" height="8" viewBox="0 0 9.5 8"><path d="M4.75 6L7 2H2.5Z" fill="#ccc"/></svg><svg style="position:absolute;left:203.3px;top:505.3px;" width="13" height="13.6" viewBox="0 0 13 13.6"><rect width="13" height="13.6" rx="2" fill="#3d3d3d"/><path d="M3.2 8Q1.8 8 1.8 6.4Q1.8 5 3.3 4.9Q3.8 2.6 6.4 2.6Q8.8 2.6 9.4 4.7Q11.3 4.8 11.3 6.5Q11.3 8 9.8 8Z" fill="#f0f0f0"/><path d="M6.5 12.3V6.6M4.3 8.6L6.5 6.2L8.7 8.6" stroke="#3d3d3d" stroke-width="2.2" fill="none"/><path d="M6.5 12.3V6.8M4.5 8.6L6.5 6.4L8.5 8.6" stroke="#f0f0f0" stroke-width="1.2" fill="none"/></svg><svg style="position:absolute;left:219.7px;top:505.3px;" width="13.3" height="13.6" viewBox="0 0 13.3 13.6"><rect width="13.3" height="13.6" rx="2" fill="#3d3d3d"/><path d="M3.5 2.5H8L10.3 4.8V11.2H3.5Z" fill="#4a4a4a" stroke="#e6e6e6" stroke-width="0.9"/><path d="M7.8 2.6V5H10.2" stroke="#e6e6e6" stroke-width="0.8" fill="none"/></svg><svg style="position:absolute;left:235.8px;top:505.3px;" width="16.7" height="13.6" viewBox="0 0 16.7 13.6"><rect width="16.7" height="13.6" rx="2" fill="#3d3d3d"/><path d="M3 2.5H7.5L9.8 4.8V11.2H3Z" fill="#4a4a4a" stroke="#e6e6e6" stroke-width="0.9"/><rect x="4.6" y="6" width="3.8" height="3.8" fill="#e6e6e6"/><path d="M12 6.6H15.4L13.7 8.8Z" fill="#e6e6e6"/></svg><svg style="position:absolute;left:256px;top:505.3px;" width="13" height="13.6" viewBox="0 0 13 13.6"><rect width="13" height="13.6" rx="2" fill="#3d3d3d"/><path d="M3 2.5H7.6L10 4.8V11.2H3Z" fill="#4a4a4a" stroke="#e6e6e6" stroke-width="0.9"/><text x="6.5" y="10" font-size="6.5" font-family="Liberation Sans,sans-serif" font-weight="bold" fill="#e6e6e6" text-anchor="middle">S</text></svg><svg style="position:absolute;left:272px;top:505.3px;" width="13" height="13.6" viewBox="0 0 13 13.6"><rect width="13" height="13.6" rx="2" fill="#3d3d3d"/><path d="M2.2 3.6H5.6L6.6 4.8H10.8V10.6H2.2Z" fill="#ececec"/></svg><svg style="position:absolute;left:288.7px;top:505.3px;" width="13" height="13.6" viewBox="0 0 13 13.6"><rect width="13" height="13.6" rx="2" fill="#3d3d3d"/><rect x="4.6" y="2.8" width="5.8" height="6" fill="#555" stroke="#cfcfcf" stroke-width="0.9"/><rect x="2.6" y="4.8" width="5.8" height="6" fill="#555" stroke="#cfcfcf" stroke-width="0.9"/></svg><div style="position:absolute;left:305px;top:507px;width:1px;height:10px;background:#4a4a4a"></div><svg style="position:absolute;left:308px;top:505.3px;" width="14" height="13.6" viewBox="0 0 14 13.6"><rect width="14" height="13.6" rx="2" fill="#3d3d3d"/><path d="M3.8 5H10.2V11.2H3.8Z" fill="none" stroke="#e6e6e6" stroke-width="1"/><path d="M3 4H11M5.6 3.8V2.6H8.4V3.8M5.9 6V10.4M8.1 6V10.4" stroke="#e6e6e6" stroke-width="0.9" fill="none"/></svg><svg style="position:absolute;left:199px;top:517px;" width="4" height="5" viewBox="0 0 4 5"><path d="M1 0.5L3 4.5M0.5 2.5L2 4.8" stroke="#777" stroke-width="0.6"/></svg><div style="position:absolute;left:817.8px;top:47.5px;width:194.2px;height:480px;background:#2a2a2a"></div><div class="hdr" style="left:817.8px;top:48px;width:194.2px;height:11px"></div><div class="t" style="left:907px;top:50px;font-size:8px;line-height:10px;color:#b0b0b0;line-height:9px;transform:translateX(-50%) scaleX(0.9);">Hoa tiêu</div><svg style="position:absolute;left:992.0px;top:50px;" width="20" height="9" viewBox="0 0 20 9"><path d="M2.5 3.4H6V7.4H2.5Z" fill="none" stroke="#a8a8a8" stroke-width="0.8"/><path d="M5 4.2L7.2 1.8M5.6 1.6H7.4V3.4" stroke="#a8a8a8" stroke-width="0.8" fill="none"/><path d="M12 2.6L15.8 6.8M15.8 2.6L12 6.8" stroke="#c4c4c4" stroke-width="1.4"/></svg><svg style="position:absolute;left:820.6px;top:62px;" width="14" height="15" viewBox="0 0 14 15"><rect width="14" height="15" rx="2" fill="#454545"/><circle cx="6.2" cy="6.4" r="3.4" fill="none" stroke="#f0f0f0" stroke-width="1.2"/><path d="M8.6 9L11.6 12.2" stroke="#f0f0f0" stroke-width="1.6"/><path d="M6.3 4.8V8" stroke="#f0f0f0" stroke-width="1"/></svg><div style="position:absolute;left:837.5px;top:63px;width:1px;height:13px;background:#3c3c3c"></div><svg style="position:absolute;left:840px;top:62px;" width="13.5" height="15" viewBox="0 0 13.5 15"><rect width="13.5" height="15" rx="2" fill="#454545"/><circle cx="6.2" cy="6.4" r="3.4" fill="none" stroke="#f0f0f0" stroke-width="1.2"/><path d="M8.6 9L11.6 12.2" stroke="#f0f0f0" stroke-width="1.6"/><path d="M4.6 6.4H7.8M6.2 4.8V8" stroke="#f0f0f0" stroke-width="0.9"/></svg><svg style="position:absolute;left:857px;top:62px;" width="13.5" height="15" viewBox="0 0 13.5 15"><rect width="13.5" height="15" rx="2" fill="#505050"/><rect x="2.5" y="3.5" width="9" height="8" fill="#888"/><path d="M2.5 6V3.5H5M9 3.5H11.5V6M11.5 9V11.5H9M5 11.5H2.5V9" stroke="#f0f0f0" stroke-width="1.2" fill="none"/></svg><svg style="position:absolute;left:873px;top:62px;" width="14" height="15" viewBox="0 0 14 15"><rect width="14" height="15" rx="2" fill="#454545"/><circle cx="6.2" cy="6.4" r="3.4" fill="none" stroke="#f0f0f0" stroke-width="1.2"/><path d="M8.6 9L11.6 12.2" stroke="#f0f0f0" stroke-width="1.6"/><path d="M4.6 6.4H7.8" stroke="#f0f0f0" stroke-width="0.9"/></svg><div style="position:absolute;left:890px;top:63px;width:1px;height:13px;background:#3c3c3c"></div><svg style="position:absolute;left:893.5px;top:62px;" width="14" height="15" viewBox="0 0 14 15"><rect width="14" height="15" rx="2" fill="#454545"/><circle cx="7" cy="7.5" r="4.6" fill="none" stroke="#f0f0f0" stroke-width="1.2"/><circle cx="7" cy="7.5" r="2.4" fill="#ddd"/><path d="M3 2.6V6H6.2" stroke="#f0f0f0" stroke-width="1.1" fill="none"/></svg><svg style="position:absolute;left:909.4px;top:62px;" width="14" height="15" viewBox="0 0 14 15"><rect width="14" height="15" rx="2" fill="#262626"/><rect x="3.5" y="4.2" width="7" height="6.6" fill="#f0f0f0"/><path d="M2 5.4V2.6H4.8M9.2 2.6H12V5.4M12 9.6V12.4H9.2M4.8 12.4H2V9.6" stroke="#f0f0f0" stroke-width="1.2" fill="none"/></svg><svg style="position:absolute;left:925.7px;top:62px;" width="14" height="15" viewBox="0 0 14 15"><rect width="14" height="15" rx="2" fill="#454545"/><circle cx="7" cy="7.5" r="4.6" fill="none" stroke="#f0f0f0" stroke-width="1.2"/><circle cx="7" cy="7.5" r="2.4" fill="#ddd"/><path d="M11 2.6V6H7.8" stroke="#f0f0f0" stroke-width="1.1" fill="none"/></svg><div style="position:absolute;left:942.5px;top:63px;width:1px;height:13px;background:#3c3c3c"></div><svg style="position:absolute;left:945.9px;top:62px;" width="14" height="15" viewBox="0 0 14 15"><rect width="14" height="15" rx="2" fill="#454545"/><rect x="2.4" y="5.6" width="4" height="6.4" fill="#f0f0f0"/><rect x="8" y="5.6" width="4" height="6.4" fill="none" stroke="#f0f0f0" stroke-width="0.9"/><path d="M4.4 4.4Q7.2 1.2 10 4.4" stroke="#f0f0f0" stroke-width="1" fill="none"/></svg><div style="position:absolute;left:817.8px;top:78.6px;width:194.2px;height:14.2px;background:#4b4949"></div><div style="position:absolute;left:905px;top:79px;width:19px;height:13.6px;background:#fff"></div><div style="position:absolute;left:904.5px;top:79px;width:14.8px;height:11.4px;background:#efefef;border:1.5px solid #cc2630;box-sizing:border-box"></div><div class="hdr" style="left:817.8px;top:95.5px;width:194.2px;height:11.5px"></div><div class="t" style="left:907px;top:97.5px;font-size:8px;line-height:10px;color:#b0b0b0;line-height:9px;transform:translateX(-50%) scaleX(0.9);">Lớp</div><svg style="position:absolute;left:992.0px;top:97.5px;" width="20" height="9" viewBox="0 0 20 9"><path d="M2.5 3.4H6V7.4H2.5Z" fill="none" stroke="#a8a8a8" stroke-width="0.8"/><path d="M5 4.2L7.2 1.8M5.6 1.6H7.4V3.4" stroke="#a8a8a8" stroke-width="0.8" fill="none"/><path d="M12 2.6L15.8 6.8M15.8 2.6L12 6.8" stroke="#c4c4c4" stroke-width="1.4"/></svg><div class="t" style="left:821px;top:111.8px;font-size:8.5px;line-height:10.5px;color:#d8d8d8;transform-origin:0 0;transform:scaleX(0.84);line-height:9px">Độ trong</div><div style="position:absolute;left:870px;top:110.6px;width:113px;height:10.6px;background:linear-gradient(to right,#86cdf8,#60aeea 60%,#4f96d8)"></div><div class="t" style="left:987px;top:111.8px;font-size:8.2px;line-height:10.2px;color:#d8d8d8;transform-origin:0 0;transform:scaleX(0.82);line-height:9px">100 %</div><div class="t" style="left:821px;top:127px;font-size:8.5px;line-height:10.5px;color:#d8d8d8;transform-origin:0 0;transform:scaleX(0.84);line-height:9px">Pha trộn</div><div style="position:absolute;left:870px;top:125.4px;width:138px;height:11.2px;background:#474747;border-radius:1px"></div><div class="t" style="left:872px;top:127px;font-size:8.5px;line-height:10.5px;color:#a9a9a9;transform-origin:0 0;transform:scaleX(0.84);line-height:9px">Bình thường</div><svg style="position:absolute;left:1001px;top:129px;" width="6" height="5" viewBox="0 0 6 5"><path d="M0.8 1H5.2L3 4Z" fill="#aaa"/></svg><div style="position:absolute;left:822.6px;top:144px;width:5.6px;height:5.6px;border:0.8px solid #4a4a4a;box-sizing:border-box"></div><div class="t" style="left:832px;top:142.8px;font-size:8.5px;line-height:10.5px;color:#5c5c5c;transform-origin:0 0;transform:scaleX(0.84);line-height:9px">Bảo vệ alpha</div><div style="position:absolute;left:887px;top:144px;width:6px;height:6px;border:1px solid #c8c8c8;box-sizing:border-box"></div><div class="t" style="left:896px;top:142.8px;font-size:8.5px;line-height:10.5px;color:#d0d0d0;transform-origin:0 0;transform:scaleX(0.84);line-height:9px">Xén bớt</div><div style="position:absolute;left:950px;top:144px;width:6px;height:6px;border:1px solid #c8c8c8;box-sizing:border-box"></div><div class="t" style="left:960px;top:142.8px;font-size:8.5px;line-height:10.5px;color:#d0d0d0;transform-origin:0 0;transform:scaleX(0.84);line-height:9px">Khóa</div><div style="position:absolute;left:818.4px;top:155.70000000000002px;width:182px;height:206.6px;overflow:hidden;background:#484848"><div style="position:absolute;left:0px;top:0.0px;width:13.5px;height:25.4px;background:#565656"></div><svg style="position:absolute;left:3.6px;top:9.6px;" width="6.6" height="6.6" viewBox="0 0 6.6 6.6"><circle cx="3.3" cy="3.3" r="3.2" fill="#e4e4e4"/></svg><div style="position:absolute;left:13.5px;top:0.0px;width:168.5px;height:25.4px;background:#4e98d2"></div><svg style="position:absolute;left:23px;top:6.4px;" width="23" height="12.8" viewBox="0 0 23 12.8"><rect width="23" height="12.8" fill="#fdfdfd"/><path d="M0.0 0.0h2.2v2.2h-2.2zM4.4 0.0h2.2v2.2h-2.2zM8.8 0.0h2.2v2.2h-2.2zM13.2 0.0h2.2v2.2h-2.2zM17.6 0.0h2.2v2.2h-2.2zM22.0 0.0h1.0v2.2h-1.0zM2.2 2.2h2.2v2.2h-2.2zM6.6 2.2h2.2v2.2h-2.2zM11.0 2.2h2.2v2.2h-2.2zM15.4 2.2h2.2v2.2h-2.2zM19.8 2.2h2.2v2.2h-2.2zM0.0 4.4h2.2v2.2h-2.2zM4.4 4.4h2.2v2.2h-2.2zM8.8 4.4h2.2v2.2h-2.2zM13.2 4.4h2.2v2.2h-2.2zM17.6 4.4h2.2v2.2h-2.2zM22.0 4.4h1.0v2.2h-1.0zM2.2 6.6h2.2v2.2h-2.2zM6.6 6.6h2.2v2.2h-2.2zM11.0 6.6h2.2v2.2h-2.2zM15.4 6.6h2.2v2.2h-2.2zM19.8 6.6h2.2v2.2h-2.2zM0.0 8.8h2.2v2.2h-2.2zM4.4 8.8h2.2v2.2h-2.2zM8.8 8.8h2.2v2.2h-2.2zM13.2 8.8h2.2v2.2h-2.2zM17.6 8.8h2.2v2.2h-2.2zM22.0 8.8h1.0v2.2h-1.0zM2.2 11.0h2.2v1.8h-2.2zM6.6 11.0h2.2v1.8h-2.2zM11.0 11.0h2.2v1.8h-2.2zM15.4 11.0h2.2v1.8h-2.2zM19.8 11.0h2.2v1.8h-2.2z" fill="#f8d2cc"/></svg><div class="t" style="left:57.2px;top:7.4px;font-size:9.8px;line-height:11.8px;color:#fff;transform-origin:0 0;transform:scaleX(0.95);line-height:12px;font-weight:bold">trolai1</div><div style="position:absolute;left:0px;top:26.4px;width:13.5px;height:25.4px;background:#565656"></div><svg style="position:absolute;left:3.6px;top:36.0px;" width="6.6" height="6.6" viewBox="0 0 6.6 6.6"><circle cx="3.3" cy="3.3" r="3.2" fill="#e4e4e4"/></svg><div style="position:absolute;left:13.5px;top:26.4px;width:168.5px;height:25.4px;background:#565656"></div><svg style="position:absolute;left:23px;top:30.3px;" width="23" height="17.8" viewBox="0 0 23 17.8"><rect width="23" height="17.8" fill="#fdfdfd"/><path d="M0.0 0.0h2.2v2.2h-2.2zM4.4 0.0h2.2v2.2h-2.2zM8.8 0.0h2.2v2.2h-2.2zM13.2 0.0h2.2v2.2h-2.2zM17.6 0.0h2.2v2.2h-2.2zM22.0 0.0h1.0v2.2h-1.0zM2.2 2.2h2.2v2.2h-2.2zM6.6 2.2h2.2v2.2h-2.2zM11.0 2.2h2.2v2.2h-2.2zM15.4 2.2h2.2v2.2h-2.2zM19.8 2.2h2.2v2.2h-2.2zM0.0 4.4h2.2v2.2h-2.2zM4.4 4.4h2.2v2.2h-2.2zM8.8 4.4h2.2v2.2h-2.2zM13.2 4.4h2.2v2.2h-2.2zM17.6 4.4h2.2v2.2h-2.2zM22.0 4.4h1.0v2.2h-1.0zM2.2 6.6h2.2v2.2h-2.2zM6.6 6.6h2.2v2.2h-2.2zM11.0 6.6h2.2v2.2h-2.2zM15.4 6.6h2.2v2.2h-2.2zM19.8 6.6h2.2v2.2h-2.2zM0.0 8.8h2.2v2.2h-2.2zM4.4 8.8h2.2v2.2h-2.2zM8.8 8.8h2.2v2.2h-2.2zM13.2 8.8h2.2v2.2h-2.2zM17.6 8.8h2.2v2.2h-2.2zM22.0 8.8h1.0v2.2h-1.0zM2.2 11.0h2.2v2.2h-2.2zM6.6 11.0h2.2v2.2h-2.2zM11.0 11.0h2.2v2.2h-2.2zM15.4 11.0h2.2v2.2h-2.2zM19.8 11.0h2.2v2.2h-2.2zM0.0 13.2h2.2v2.2h-2.2zM4.4 13.2h2.2v2.2h-2.2zM8.8 13.2h2.2v2.2h-2.2zM13.2 13.2h2.2v2.2h-2.2zM17.6 13.2h2.2v2.2h-2.2zM22.0 13.2h1.0v2.2h-1.0zM2.2 15.4h2.2v2.2h-2.2zM6.6 15.4h2.2v2.2h-2.2zM11.0 15.4h2.2v2.2h-2.2zM15.4 15.4h2.2v2.2h-2.2zM19.8 15.4h2.2v2.2h-2.2zM0.0 17.6h2.2v0.2h-2.2zM4.4 17.6h2.2v0.2h-2.2zM8.8 17.6h2.2v0.2h-2.2zM13.2 17.6h2.2v0.2h-2.2zM17.6 17.6h2.2v0.2h-2.2zM22.0 17.6h1.0v0.2h-1.0z" fill="#e3e3e3"/></svg><div class="t" style="left:57px;top:34.4px;font-size:9.5px;line-height:11.5px;color:#e8e8e8;transform-origin:0 0;transform:scaleX(0.88);line-height:11px">Lớp38</div><div style="position:absolute;left:0px;top:52.8px;width:13.5px;height:25.4px;background:#565656"></div><svg style="position:absolute;left:3.6px;top:62.4px;" width="6.6" height="6.6" viewBox="0 0 6.6 6.6"><circle cx="3.3" cy="3.3" r="3.2" fill="#e4e4e4"/></svg><div style="position:absolute;left:13.5px;top:52.8px;width:168.5px;height:25.4px;background:#565656"></div><svg style="position:absolute;left:23px;top:56.7px;" width="23" height="17.8" viewBox="0 0 23 17.8"><rect width="23" height="17.8" fill="#fdfdfd"/><path d="M0.0 0.0h2.2v2.2h-2.2zM4.4 0.0h2.2v2.2h-2.2zM8.8 0.0h2.2v2.2h-2.2zM13.2 0.0h2.2v2.2h-2.2zM17.6 0.0h2.2v2.2h-2.2zM22.0 0.0h1.0v2.2h-1.0zM2.2 2.2h2.2v2.2h-2.2zM6.6 2.2h2.2v2.2h-2.2zM11.0 2.2h2.2v2.2h-2.2zM15.4 2.2h2.2v2.2h-2.2zM19.8 2.2h2.2v2.2h-2.2zM0.0 4.4h2.2v2.2h-2.2zM4.4 4.4h2.2v2.2h-2.2zM8.8 4.4h2.2v2.2h-2.2zM13.2 4.4h2.2v2.2h-2.2zM17.6 4.4h2.2v2.2h-2.2zM22.0 4.4h1.0v2.2h-1.0zM2.2 6.6h2.2v2.2h-2.2zM6.6 6.6h2.2v2.2h-2.2zM11.0 6.6h2.2v2.2h-2.2zM15.4 6.6h2.2v2.2h-2.2zM19.8 6.6h2.2v2.2h-2.2zM0.0 8.8h2.2v2.2h-2.2zM4.4 8.8h2.2v2.2h-2.2zM8.8 8.8h2.2v2.2h-2.2zM13.2 8.8h2.2v2.2h-2.2zM17.6 8.8h2.2v2.2h-2.2zM22.0 8.8h1.0v2.2h-1.0zM2.2 11.0h2.2v2.2h-2.2zM6.6 11.0h2.2v2.2h-2.2zM11.0 11.0h2.2v2.2h-2.2zM15.4 11.0h2.2v2.2h-2.2zM19.8 11.0h2.2v2.2h-2.2zM0.0 13.2h2.2v2.2h-2.2zM4.4 13.2h2.2v2.2h-2.2zM8.8 13.2h2.2v2.2h-2.2zM13.2 13.2h2.2v2.2h-2.2zM17.6 13.2h2.2v2.2h-2.2zM22.0 13.2h1.0v2.2h-1.0zM2.2 15.4h2.2v2.2h-2.2zM6.6 15.4h2.2v2.2h-2.2zM11.0 15.4h2.2v2.2h-2.2zM15.4 15.4h2.2v2.2h-2.2zM19.8 15.4h2.2v2.2h-2.2zM0.0 17.6h2.2v0.2h-2.2zM4.4 17.6h2.2v0.2h-2.2zM8.8 17.6h2.2v0.2h-2.2zM13.2 17.6h2.2v0.2h-2.2zM17.6 17.6h2.2v0.2h-2.2zM22.0 17.6h1.0v0.2h-1.0z" fill="#e3e3e3"/></svg><div class="t" style="left:57px;top:60.8px;font-size:9.5px;line-height:11.5px;color:#e8e8e8;transform-origin:0 0;transform:scaleX(0.88);line-height:11px">Lớp37</div><div style="position:absolute;left:0px;top:79.2px;width:13.5px;height:25.4px;background:#565656"></div><svg style="position:absolute;left:3.6px;top:88.8px;" width="6.6" height="6.6" viewBox="0 0 6.6 6.6"><circle cx="3.3" cy="3.3" r="3.2" fill="#e4e4e4"/></svg><div style="position:absolute;left:13.5px;top:79.2px;width:168.5px;height:25.4px;background:#565656"></div><svg style="position:absolute;left:23px;top:83.1px;" width="23" height="17.8" viewBox="0 0 23 17.8"><rect width="23" height="17.8" fill="#fdfdfd"/><path d="M0.0 0.0h2.2v2.2h-2.2zM4.4 0.0h2.2v2.2h-2.2zM8.8 0.0h2.2v2.2h-2.2zM13.2 0.0h2.2v2.2h-2.2zM17.6 0.0h2.2v2.2h-2.2zM22.0 0.0h1.0v2.2h-1.0zM2.2 2.2h2.2v2.2h-2.2zM6.6 2.2h2.2v2.2h-2.2zM11.0 2.2h2.2v2.2h-2.2zM15.4 2.2h2.2v2.2h-2.2zM19.8 2.2h2.2v2.2h-2.2zM0.0 4.4h2.2v2.2h-2.2zM4.4 4.4h2.2v2.2h-2.2zM8.8 4.4h2.2v2.2h-2.2zM13.2 4.4h2.2v2.2h-2.2zM17.6 4.4h2.2v2.2h-2.2zM22.0 4.4h1.0v2.2h-1.0zM2.2 6.6h2.2v2.2h-2.2zM6.6 6.6h2.2v2.2h-2.2zM11.0 6.6h2.2v2.2h-2.2zM15.4 6.6h2.2v2.2h-2.2zM19.8 6.6h2.2v2.2h-2.2zM0.0 8.8h2.2v2.2h-2.2zM4.4 8.8h2.2v2.2h-2.2zM8.8 8.8h2.2v2.2h-2.2zM13.2 8.8h2.2v2.2h-2.2zM17.6 8.8h2.2v2.2h-2.2zM22.0 8.8h1.0v2.2h-1.0zM2.2 11.0h2.2v2.2h-2.2zM6.6 11.0h2.2v2.2h-2.2zM11.0 11.0h2.2v2.2h-2.2zM15.4 11.0h2.2v2.2h-2.2zM19.8 11.0h2.2v2.2h-2.2zM0.0 13.2h2.2v2.2h-2.2zM4.4 13.2h2.2v2.2h-2.2zM8.8 13.2h2.2v2.2h-2.2zM13.2 13.2h2.2v2.2h-2.2zM17.6 13.2h2.2v2.2h-2.2zM22.0 13.2h1.0v2.2h-1.0zM2.2 15.4h2.2v2.2h-2.2zM6.6 15.4h2.2v2.2h-2.2zM11.0 15.4h2.2v2.2h-2.2zM15.4 15.4h2.2v2.2h-2.2zM19.8 15.4h2.2v2.2h-2.2zM0.0 17.6h2.2v0.2h-2.2zM4.4 17.6h2.2v0.2h-2.2zM8.8 17.6h2.2v0.2h-2.2zM13.2 17.6h2.2v0.2h-2.2zM17.6 17.6h2.2v0.2h-2.2zM22.0 17.6h1.0v0.2h-1.0z" fill="#e3e3e3"/></svg><div class="t" style="left:57px;top:87.2px;font-size:9.5px;line-height:11.5px;color:#e8e8e8;transform-origin:0 0;transform:scaleX(0.88);line-height:11px">Lớp36</div><div style="position:absolute;left:0px;top:105.6px;width:13.5px;height:25.4px;background:#565656"></div><svg style="position:absolute;left:3.6px;top:115.2px;" width="6.6" height="6.6" viewBox="0 0 6.6 6.6"><circle cx="3.3" cy="3.3" r="3.2" fill="#e4e4e4"/></svg><div style="position:absolute;left:13.5px;top:105.6px;width:168.5px;height:25.4px;background:#565656"></div><svg style="position:absolute;left:23px;top:109.5px;" width="23" height="17.8" viewBox="0 0 23 17.8"><rect width="23" height="17.8" fill="#fdfdfd"/><path d="M0.0 0.0h2.2v2.2h-2.2zM4.4 0.0h2.2v2.2h-2.2zM8.8 0.0h2.2v2.2h-2.2zM13.2 0.0h2.2v2.2h-2.2zM17.6 0.0h2.2v2.2h-2.2zM22.0 0.0h1.0v2.2h-1.0zM2.2 2.2h2.2v2.2h-2.2zM6.6 2.2h2.2v2.2h-2.2zM11.0 2.2h2.2v2.2h-2.2zM15.4 2.2h2.2v2.2h-2.2zM19.8 2.2h2.2v2.2h-2.2zM0.0 4.4h2.2v2.2h-2.2zM4.4 4.4h2.2v2.2h-2.2zM8.8 4.4h2.2v2.2h-2.2zM13.2 4.4h2.2v2.2h-2.2zM17.6 4.4h2.2v2.2h-2.2zM22.0 4.4h1.0v2.2h-1.0zM2.2 6.6h2.2v2.2h-2.2zM6.6 6.6h2.2v2.2h-2.2zM11.0 6.6h2.2v2.2h-2.2zM15.4 6.6h2.2v2.2h-2.2zM19.8 6.6h2.2v2.2h-2.2zM0.0 8.8h2.2v2.2h-2.2zM4.4 8.8h2.2v2.2h-2.2zM8.8 8.8h2.2v2.2h-2.2zM13.2 8.8h2.2v2.2h-2.2zM17.6 8.8h2.2v2.2h-2.2zM22.0 8.8h1.0v2.2h-1.0zM2.2 11.0h2.2v2.2h-2.2zM6.6 11.0h2.2v2.2h-2.2zM11.0 11.0h2.2v2.2h-2.2zM15.4 11.0h2.2v2.2h-2.2zM19.8 11.0h2.2v2.2h-2.2zM0.0 13.2h2.2v2.2h-2.2zM4.4 13.2h2.2v2.2h-2.2zM8.8 13.2h2.2v2.2h-2.2zM13.2 13.2h2.2v2.2h-2.2zM17.6 13.2h2.2v2.2h-2.2zM22.0 13.2h1.0v2.2h-1.0zM2.2 15.4h2.2v2.2h-2.2zM6.6 15.4h2.2v2.2h-2.2zM11.0 15.4h2.2v2.2h-2.2zM15.4 15.4h2.2v2.2h-2.2zM19.8 15.4h2.2v2.2h-2.2zM0.0 17.6h2.2v0.2h-2.2zM4.4 17.6h2.2v0.2h-2.2zM8.8 17.6h2.2v0.2h-2.2zM13.2 17.6h2.2v0.2h-2.2zM17.6 17.6h2.2v0.2h-2.2zM22.0 17.6h1.0v0.2h-1.0z" fill="#e3e3e3"/></svg><div class="t" style="left:57px;top:113.6px;font-size:9.5px;line-height:11.5px;color:#e8e8e8;transform-origin:0 0;transform:scaleX(0.88);line-height:11px">Lớp35</div><div style="position:absolute;left:0px;top:132.0px;width:13.5px;height:25.4px;background:#565656"></div><svg style="position:absolute;left:3.6px;top:141.6px;" width="6.6" height="6.6" viewBox="0 0 6.6 6.6"><circle cx="3.3" cy="3.3" r="3.2" fill="#e4e4e4"/></svg><div style="position:absolute;left:13.5px;top:132.0px;width:168.5px;height:25.4px;background:#565656"></div><svg style="position:absolute;left:23px;top:135.9px;" width="23" height="17.8" viewBox="0 0 23 17.8"><rect width="23" height="17.8" fill="#fdfdfd"/><path d="M0.0 0.0h2.2v2.2h-2.2zM4.4 0.0h2.2v2.2h-2.2zM8.8 0.0h2.2v2.2h-2.2zM13.2 0.0h2.2v2.2h-2.2zM17.6 0.0h2.2v2.2h-2.2zM22.0 0.0h1.0v2.2h-1.0zM2.2 2.2h2.2v2.2h-2.2zM6.6 2.2h2.2v2.2h-2.2zM11.0 2.2h2.2v2.2h-2.2zM15.4 2.2h2.2v2.2h-2.2zM19.8 2.2h2.2v2.2h-2.2zM0.0 4.4h2.2v2.2h-2.2zM4.4 4.4h2.2v2.2h-2.2zM8.8 4.4h2.2v2.2h-2.2zM13.2 4.4h2.2v2.2h-2.2zM17.6 4.4h2.2v2.2h-2.2zM22.0 4.4h1.0v2.2h-1.0zM2.2 6.6h2.2v2.2h-2.2zM6.6 6.6h2.2v2.2h-2.2zM11.0 6.6h2.2v2.2h-2.2zM15.4 6.6h2.2v2.2h-2.2zM19.8 6.6h2.2v2.2h-2.2zM0.0 8.8h2.2v2.2h-2.2zM4.4 8.8h2.2v2.2h-2.2zM8.8 8.8h2.2v2.2h-2.2zM13.2 8.8h2.2v2.2h-2.2zM17.6 8.8h2.2v2.2h-2.2zM22.0 8.8h1.0v2.2h-1.0zM2.2 11.0h2.2v2.2h-2.2zM6.6 11.0h2.2v2.2h-2.2zM11.0 11.0h2.2v2.2h-2.2zM15.4 11.0h2.2v2.2h-2.2zM19.8 11.0h2.2v2.2h-2.2zM0.0 13.2h2.2v2.2h-2.2zM4.4 13.2h2.2v2.2h-2.2zM8.8 13.2h2.2v2.2h-2.2zM13.2 13.2h2.2v2.2h-2.2zM17.6 13.2h2.2v2.2h-2.2zM22.0 13.2h1.0v2.2h-1.0zM2.2 15.4h2.2v2.2h-2.2zM6.6 15.4h2.2v2.2h-2.2zM11.0 15.4h2.2v2.2h-2.2zM15.4 15.4h2.2v2.2h-2.2zM19.8 15.4h2.2v2.2h-2.2zM0.0 17.6h2.2v0.2h-2.2zM4.4 17.6h2.2v0.2h-2.2zM8.8 17.6h2.2v0.2h-2.2zM13.2 17.6h2.2v0.2h-2.2zM17.6 17.6h2.2v0.2h-2.2zM22.0 17.6h1.0v0.2h-1.0z" fill="#e3e3e3"/></svg><div class="t" style="left:57px;top:140.0px;font-size:9.5px;line-height:11.5px;color:#e8e8e8;transform-origin:0 0;transform:scaleX(0.88);line-height:11px">Lớp34</div><div style="position:absolute;left:0px;top:158.4px;width:13.5px;height:25.4px;background:#565656"></div><svg style="position:absolute;left:3.6px;top:168.0px;" width="6.6" height="6.6" viewBox="0 0 6.6 6.6"><circle cx="3.3" cy="3.3" r="3.2" fill="#e4e4e4"/></svg><div style="position:absolute;left:13.5px;top:158.4px;width:168.5px;height:25.4px;background:#565656"></div><svg style="position:absolute;left:23px;top:162.3px;" width="23" height="17.8" viewBox="0 0 23 17.8"><rect width="23" height="17.8" fill="#fdfdfd"/><path d="M0.0 0.0h2.2v2.2h-2.2zM4.4 0.0h2.2v2.2h-2.2zM8.8 0.0h2.2v2.2h-2.2zM13.2 0.0h2.2v2.2h-2.2zM17.6 0.0h2.2v2.2h-2.2zM22.0 0.0h1.0v2.2h-1.0zM2.2 2.2h2.2v2.2h-2.2zM6.6 2.2h2.2v2.2h-2.2zM11.0 2.2h2.2v2.2h-2.2zM15.4 2.2h2.2v2.2h-2.2zM19.8 2.2h2.2v2.2h-2.2zM0.0 4.4h2.2v2.2h-2.2zM4.4 4.4h2.2v2.2h-2.2zM8.8 4.4h2.2v2.2h-2.2zM13.2 4.4h2.2v2.2h-2.2zM17.6 4.4h2.2v2.2h-2.2zM22.0 4.4h1.0v2.2h-1.0zM2.2 6.6h2.2v2.2h-2.2zM6.6 6.6h2.2v2.2h-2.2zM11.0 6.6h2.2v2.2h-2.2zM15.4 6.6h2.2v2.2h-2.2zM19.8 6.6h2.2v2.2h-2.2zM0.0 8.8h2.2v2.2h-2.2zM4.4 8.8h2.2v2.2h-2.2zM8.8 8.8h2.2v2.2h-2.2zM13.2 8.8h2.2v2.2h-2.2zM17.6 8.8h2.2v2.2h-2.2zM22.0 8.8h1.0v2.2h-1.0zM2.2 11.0h2.2v2.2h-2.2zM6.6 11.0h2.2v2.2h-2.2zM11.0 11.0h2.2v2.2h-2.2zM15.4 11.0h2.2v2.2h-2.2zM19.8 11.0h2.2v2.2h-2.2zM0.0 13.2h2.2v2.2h-2.2zM4.4 13.2h2.2v2.2h-2.2zM8.8 13.2h2.2v2.2h-2.2zM13.2 13.2h2.2v2.2h-2.2zM17.6 13.2h2.2v2.2h-2.2zM22.0 13.2h1.0v2.2h-1.0zM2.2 15.4h2.2v2.2h-2.2zM6.6 15.4h2.2v2.2h-2.2zM11.0 15.4h2.2v2.2h-2.2zM15.4 15.4h2.2v2.2h-2.2zM19.8 15.4h2.2v2.2h-2.2zM0.0 17.6h2.2v0.2h-2.2zM4.4 17.6h2.2v0.2h-2.2zM8.8 17.6h2.2v0.2h-2.2zM13.2 17.6h2.2v0.2h-2.2zM17.6 17.6h2.2v0.2h-2.2zM22.0 17.6h1.0v0.2h-1.0z" fill="#e3e3e3"/></svg><div class="t" style="left:57px;top:166.4px;font-size:9.5px;line-height:11.5px;color:#e8e8e8;transform-origin:0 0;transform:scaleX(0.88);line-height:11px">Lớp33</div><div style="position:absolute;left:0px;top:184.8px;width:13.5px;height:25.4px;background:#565656"></div><svg style="position:absolute;left:3.6px;top:194.4px;" width="6.6" height="6.6" viewBox="0 0 6.6 6.6"><circle cx="3.3" cy="3.3" r="3.2" fill="#e4e4e4"/></svg><div style="position:absolute;left:13.5px;top:184.8px;width:168.5px;height:25.4px;background:#565656"></div><svg style="position:absolute;left:23px;top:188.7px;" width="23" height="17.8" viewBox="0 0 23 17.8"><rect width="23" height="17.8" fill="#fdfdfd"/><path d="M0.0 0.0h2.2v2.2h-2.2zM4.4 0.0h2.2v2.2h-2.2zM8.8 0.0h2.2v2.2h-2.2zM13.2 0.0h2.2v2.2h-2.2zM17.6 0.0h2.2v2.2h-2.2zM22.0 0.0h1.0v2.2h-1.0zM2.2 2.2h2.2v2.2h-2.2zM6.6 2.2h2.2v2.2h-2.2zM11.0 2.2h2.2v2.2h-2.2zM15.4 2.2h2.2v2.2h-2.2zM19.8 2.2h2.2v2.2h-2.2zM0.0 4.4h2.2v2.2h-2.2zM4.4 4.4h2.2v2.2h-2.2zM8.8 4.4h2.2v2.2h-2.2zM13.2 4.4h2.2v2.2h-2.2zM17.6 4.4h2.2v2.2h-2.2zM22.0 4.4h1.0v2.2h-1.0zM2.2 6.6h2.2v2.2h-2.2zM6.6 6.6h2.2v2.2h-2.2zM11.0 6.6h2.2v2.2h-2.2zM15.4 6.6h2.2v2.2h-2.2zM19.8 6.6h2.2v2.2h-2.2zM0.0 8.8h2.2v2.2h-2.2zM4.4 8.8h2.2v2.2h-2.2zM8.8 8.8h2.2v2.2h-2.2zM13.2 8.8h2.2v2.2h-2.2zM17.6 8.8h2.2v2.2h-2.2zM22.0 8.8h1.0v2.2h-1.0zM2.2 11.0h2.2v2.2h-2.2zM6.6 11.0h2.2v2.2h-2.2zM11.0 11.0h2.2v2.2h-2.2zM15.4 11.0h2.2v2.2h-2.2zM19.8 11.0h2.2v2.2h-2.2zM0.0 13.2h2.2v2.2h-2.2zM4.4 13.2h2.2v2.2h-2.2zM8.8 13.2h2.2v2.2h-2.2zM13.2 13.2h2.2v2.2h-2.2zM17.6 13.2h2.2v2.2h-2.2zM22.0 13.2h1.0v2.2h-1.0zM2.2 15.4h2.2v2.2h-2.2zM6.6 15.4h2.2v2.2h-2.2zM11.0 15.4h2.2v2.2h-2.2zM15.4 15.4h2.2v2.2h-2.2zM19.8 15.4h2.2v2.2h-2.2zM0.0 17.6h2.2v0.2h-2.2zM4.4 17.6h2.2v0.2h-2.2zM8.8 17.6h2.2v0.2h-2.2zM13.2 17.6h2.2v0.2h-2.2zM17.6 17.6h2.2v0.2h-2.2zM22.0 17.6h1.0v0.2h-1.0z" fill="#e3e3e3"/></svg><div class="t" style="left:57px;top:192.8px;font-size:9.5px;line-height:11.5px;color:#e8e8e8;transform-origin:0 0;transform:scaleX(0.88);line-height:11px">Lớp32</div></div><svg style="position:absolute;left:988px;top:163.2px;" width="10.5" height="10.5" viewBox="0 0 10.5 10.5"><rect x="4.09" y="0" width="2.31" height="10.50" transform="rotate(0 5.25 5.25)" fill="#fff"/><rect x="4.09" y="0" width="2.31" height="10.50" transform="rotate(45 5.25 5.25)" fill="#fff"/><rect x="4.09" y="0" width="2.31" height="10.50" transform="rotate(90 5.25 5.25)" fill="#fff"/><rect x="4.09" y="0" width="2.31" height="10.50" transform="rotate(135 5.25 5.25)" fill="#fff"/><circle cx="5.25" cy="5.25" r="3.88" fill="#fff"/><circle cx="5.25" cy="5.25" r="1.68" fill="#4e98d2"/></svg><div style="position:absolute;left:1001px;top:155.4px;width:10px;height:206.9px;background:#383838"></div><div style="position:absolute;left:1001.5px;top:161.5px;width:9px;height:66px;background:#6a6a6a;border-radius:3px"></div><svg style="position:absolute;left:1001px;top:154.5px;" width="10" height="8" viewBox="0 0 10 8"><path d="M5 2L7.4 6H2.6Z" fill="#ccc"/></svg><svg style="position:absolute;left:1001px;top:353.5px;" width="10" height="8" viewBox="0 0 10 8"><path d="M5 6L7.4 2H2.6Z" fill="#ccc"/></svg><svg style="position:absolute;left:821.7px;top:364.7px;" width="14" height="14" viewBox="0 0 14 14"><rect width="14" height="14" rx="2" fill="#444"/><g transform="translate(0.3,0.2) scale(1.06)"><path d="M3.3 2.5H7.8L10 4.8V11.2H3.3Z" fill="#4a4a4a" stroke="#e6e6e6" stroke-width="0.9"/><path d="M7.6 2.6V5H9.9" stroke="#e6e6e6" stroke-width="0.8" fill="none"/></g></svg><svg style="position:absolute;left:838.1px;top:364.7px;" width="14" height="14" viewBox="0 0 14 14"><rect width="14" height="14" rx="2" fill="#444"/><g transform="translate(0.3,0.2) scale(1.06)"><path d="M3.3 2.5H7.8L10 4.8V11.2H3.3Z" fill="#4a4a4a" stroke="#e6e6e6" stroke-width="0.9"/><path d="M7.6 2.6V5H9.9" stroke="#e6e6e6" stroke-width="0.8" fill="none"/><text x="6.5" y="10.4" font-size="5.5" font-family="Liberation Sans,sans-serif" font-weight="bold" fill="#e6e6e6" text-anchor="middle">8</text></g></svg><svg style="position:absolute;left:854.5px;top:364.7px;" width="14" height="14" viewBox="0 0 14 14"><rect width="14" height="14" rx="2" fill="#444"/><g transform="translate(0.3,0.2) scale(1.06)"><path d="M3.3 2.5H7.8L10 4.8V11.2H3.3Z" fill="#4a4a4a" stroke="#e6e6e6" stroke-width="0.9"/><path d="M7.6 2.6V5H9.9" stroke="#e6e6e6" stroke-width="0.8" fill="none"/><text x="6.5" y="10.4" font-size="5.5" font-family="Liberation Sans,sans-serif" font-weight="bold" fill="#e6e6e6" text-anchor="middle">1</text></g></svg><svg style="position:absolute;left:870.8px;top:364.7px;" width="17.8" height="14" viewBox="0 0 17.8 14"><rect width="17.8" height="14" rx="2" fill="#444"/><g transform="translate(0.3,0.2) scale(1.06)"><path d="M3.3 2.5H7.8L10 4.8V11.2H3.3Z" fill="#4a4a4a" stroke="#e6e6e6" stroke-width="0.9"/><path d="M7.6 2.6V5H9.9" stroke="#e6e6e6" stroke-width="0.8" fill="none"/><path d="M5 8H8.4M6.7 6.3V9.7" stroke="#e6e6e6" stroke-width="0.9"/><path d="M11.4 6.6H14.6L13 8.8Z" fill="#e6e6e6"/></g></svg><svg style="position:absolute;left:890.3px;top:364.7px;" width="14.8" height="14" viewBox="0 0 14.8 14"><rect width="14.8" height="14" rx="2" fill="#444"/><g transform="translate(0.3,0.2) scale(1.06)"><path d="M2.2 3.6H5.6L6.6 4.8H10.6V10.6H2.2Z" fill="#ececec"/></g></svg><div style="position:absolute;left:907.3px;top:366.5px;width:1px;height:10.5px;background:#4a4a4a"></div><svg style="position:absolute;left:910.5px;top:364.7px;" width="14.3" height="14" viewBox="0 0 14.3 14"><rect width="14.3" height="14" rx="2" fill="#444"/><g transform="translate(0.3,0.2) scale(1.06)"><rect x="4.6" y="2.8" width="5.8" height="6" fill="#555" stroke="#cfcfcf" stroke-width="0.9"/><rect x="2.6" y="4.8" width="5.8" height="6" fill="#555" stroke="#cfcfcf" stroke-width="0.9"/></g></svg><svg style="position:absolute;left:926.8px;top:364.7px;" width="14.2" height="14" viewBox="0 0 14.2 14"><rect width="14.2" height="14" rx="2" fill="#444"/><g transform="translate(0.3,0.2) scale(1.06)"><rect x="-0.3" y="-0.2" width="13.4" height="13.3" rx="2" fill="#202020"/><path d="M2.4 3H6V6H2.4ZM2.4 8H6V11H2.4ZM8 5.4H11.4V8.6H8Z" fill="#f0f0f0"/><path d="M6 4.5H7V9.5H6M7 7H8" stroke="#f0f0f0" stroke-width="0.8" fill="none"/></g></svg><div style="position:absolute;left:943.5px;top:367px;width:1px;height:10px;background:#4a4a4a"></div><svg style="position:absolute;left:946.7px;top:364.7px;" width="14.2" height="14" viewBox="0 0 14.2 14"><rect width="14.2" height="14" rx="2" fill="#444"/><g transform="translate(0.3,0.2) scale(1.06)"><path d="M3.6 5H10V11.2H3.6Z" fill="none" stroke="#e6e6e6" stroke-width="1"/><path d="M2.8 4H10.8M5.4 3.8V2.6H8.2V3.8M5.7 6V10.4M7.9 6V10.4" stroke="#e6e6e6" stroke-width="0.9" fill="none"/></g></svg><div class="hdr" style="left:817.8px;top:385.3px;width:194.2px;height:11.6px"></div><div class="t" style="left:907px;top:387.3px;font-size:8px;line-height:10px;color:#b0b0b0;line-height:9px;transform:translateX(-50%) scaleX(0.9);">Brush Size</div><svg style="position:absolute;left:992.0px;top:387.3px;" width="20" height="9" viewBox="0 0 20 9"><path d="M2.5 3.4H6V7.4H2.5Z" fill="none" stroke="#a8a8a8" stroke-width="0.8"/><path d="M5 4.2L7.2 1.8M5.6 1.6H7.4V3.4" stroke="#a8a8a8" stroke-width="0.8" fill="none"/><path d="M12 2.6L15.8 6.8M15.8 2.6L12 6.8" stroke="#c4c4c4" stroke-width="1.4"/></svg><div style="position:absolute;left:817.8px;top:397.5px;width:183.5px;height:127px;background:#494746"></div><div style="position:absolute;left:818px;top:397.6px;width:157.9px;height:126.9px;overflow:hidden;background:#4a4a4a"><div style="position:absolute;left:0.4px;top:0.4px;width:25.52px;height:31.8px;background:#565656"></div><div class="t" style="left:13.16px;top:24.6px;font-size:6.5px;line-height:8.5px;color:#d0d0d0;line-height:7px;transform:translateX(-50%) scaleX(0.9)">1</div><div style="position:absolute;left:26.72px;top:0.4px;width:25.52px;height:31.8px;background:#565656"></div><svg style="position:absolute;left:30.98px;top:5.1px;" width="17" height="17" viewBox="0 0 17 17"><circle cx="8.5" cy="8.5" r="0.45" fill="#ececec"/></svg><div class="t" style="left:39.48px;top:24.6px;font-size:6.5px;line-height:8.5px;color:#d0d0d0;line-height:7px;transform:translateX(-50%) scaleX(0.9)">1.5</div><div style="position:absolute;left:53.04px;top:0.4px;width:25.52px;height:31.8px;background:#565656"></div><svg style="position:absolute;left:57.3px;top:5.1px;" width="17" height="17" viewBox="0 0 17 17"><circle cx="8.5" cy="8.5" r="0.7" fill="#ececec"/></svg><div class="t" style="left:65.8px;top:24.6px;font-size:6.5px;line-height:8.5px;color:#d0d0d0;line-height:7px;transform:translateX(-50%) scaleX(0.9)">2</div><div style="position:absolute;left:79.36px;top:0.4px;width:25.52px;height:31.8px;background:#565656"></div><svg style="position:absolute;left:83.62px;top:5.1px;" width="17" height="17" viewBox="0 0 17 17"><circle cx="8.5" cy="8.5" r="1.0" fill="#ececec"/></svg><div class="t" style="left:92.12px;top:24.6px;font-size:6.5px;line-height:8.5px;color:#d0d0d0;line-height:7px;transform:translateX(-50%) scaleX(0.9)">3</div><div style="position:absolute;left:105.68px;top:0.4px;width:25.52px;height:31.8px;background:#565656"></div><svg style="position:absolute;left:109.94px;top:5.1px;" width="17" height="17" viewBox="0 0 17 17"><circle cx="8.5" cy="8.5" r="1.35" fill="#ececec"/></svg><div class="t" style="left:118.44px;top:24.6px;font-size:6.5px;line-height:8.5px;color:#d0d0d0;line-height:7px;transform:translateX(-50%) scaleX(0.9)">4</div><div style="position:absolute;left:132.0px;top:0.4px;width:25.52px;height:31.8px;background:#565656"></div><svg style="position:absolute;left:136.26px;top:5.1px;" width="17" height="17" viewBox="0 0 17 17"><circle cx="8.5" cy="8.5" r="1.6" fill="#ececec"/></svg><div class="t" style="left:144.76px;top:24.6px;font-size:6.5px;line-height:8.5px;color:#d0d0d0;line-height:7px;transform:translateX(-50%) scaleX(0.9)">5</div><div style="position:absolute;left:0.4px;top:33.0px;width:25.52px;height:31.8px;background:#565656"></div><svg style="position:absolute;left:4.66px;top:37.7px;" width="17" height="17" viewBox="0 0 17 17"><circle cx="8.5" cy="8.5" r="2.0" fill="#ececec"/></svg><div class="t" style="left:13.16px;top:57.2px;font-size:6.5px;line-height:8.5px;color:#d0d0d0;line-height:7px;transform:translateX(-50%) scaleX(0.9)">7</div><div style="position:absolute;left:26.72px;top:33.0px;width:25.52px;height:31.8px;background:#565656"></div><svg style="position:absolute;left:30.98px;top:37.7px;" width="17" height="17" viewBox="0 0 17 17"><circle cx="8.5" cy="8.5" r="2.8" fill="#ececec"/></svg><div class="t" style="left:39.48px;top:57.2px;font-size:6.5px;line-height:8.5px;color:#d0d0d0;line-height:7px;transform:translateX(-50%) scaleX(0.9)">10</div><div style="position:absolute;left:53.04px;top:33.0px;width:25.52px;height:31.8px;background:#565656"></div><svg style="position:absolute;left:57.3px;top:37.7px;" width="17" height="17" viewBox="0 0 17 17"><circle cx="8.5" cy="8.5" r="3.4" fill="#ececec"/></svg><div class="t" style="left:65.8px;top:57.2px;font-size:6.5px;line-height:8.5px;color:#d0d0d0;line-height:7px;transform:translateX(-50%) scaleX(0.9)">12</div><div style="position:absolute;left:79.36px;top:33.0px;width:25.52px;height:31.8px;background:#565656"></div><svg style="position:absolute;left:83.62px;top:37.7px;" width="17" height="17" viewBox="0 0 17 17"><circle cx="8.5" cy="8.5" r="4.3" fill="#ececec"/></svg><div class="t" style="left:92.12px;top:57.2px;font-size:6.5px;line-height:8.5px;color:#d0d0d0;line-height:7px;transform:translateX(-50%) scaleX(0.9)">15</div><div style="position:absolute;left:105.68px;top:33.0px;width:25.52px;height:31.8px;background:#565656"></div><svg style="position:absolute;left:109.94px;top:37.7px;" width="17" height="17" viewBox="0 0 17 17"><circle cx="8.5" cy="8.5" r="5.6" fill="#ececec"/></svg><div class="t" style="left:118.44px;top:57.2px;font-size:6.5px;line-height:8.5px;color:#d0d0d0;line-height:7px;transform:translateX(-50%) scaleX(0.9)">20</div><div style="position:absolute;left:132.0px;top:33.0px;width:25.52px;height:31.8px;background:#565656"></div><svg style="position:absolute;left:136.26px;top:37.7px;" width="17" height="17" viewBox="0 0 17 17"><circle cx="8.5" cy="8.5" r="7.0" fill="#ececec"/></svg><div class="t" style="left:144.76px;top:57.2px;font-size:6.5px;line-height:8.5px;color:#d0d0d0;line-height:7px;transform:translateX(-50%) scaleX(0.9)">25</div><div style="position:absolute;left:0.4px;top:65.6px;width:25.52px;height:31.8px;background:#565656"></div><svg style="position:absolute;left:4.66px;top:70.3px;" width="17" height="17" viewBox="0 0 17 17"><circle cx="8.5" cy="8.5" r="8" fill="#ececec"/></svg><div class="t" style="left:13.16px;top:89.8px;font-size:6.5px;line-height:8.5px;color:#d0d0d0;line-height:7px;transform:translateX(-50%) scaleX(0.9)">30</div><div style="position:absolute;left:26.72px;top:65.6px;width:25.52px;height:31.8px;background:#565656"></div><svg style="position:absolute;left:30.98px;top:70.3px;" width="17" height="17" viewBox="0 0 17 17"><circle cx="8.5" cy="8.5" r="8" fill="#ececec"/></svg><div class="t" style="left:39.48px;top:89.8px;font-size:6.5px;line-height:8.5px;color:#d0d0d0;line-height:7px;transform:translateX(-50%) scaleX(0.9)">40</div><div style="position:absolute;left:53.04px;top:65.6px;width:25.52px;height:31.8px;background:#565656"></div><svg style="position:absolute;left:57.3px;top:70.3px;" width="17" height="17" viewBox="0 0 17 17"><circle cx="8.5" cy="8.5" r="8" fill="#ececec"/></svg><div class="t" style="left:65.8px;top:89.8px;font-size:6.5px;line-height:8.5px;color:#d0d0d0;line-height:7px;transform:translateX(-50%) scaleX(0.9)">50</div><div style="position:absolute;left:79.36px;top:65.6px;width:25.52px;height:31.8px;background:#565656"></div><svg style="position:absolute;left:83.62px;top:70.3px;" width="17" height="17" viewBox="0 0 17 17"><circle cx="8.5" cy="8.5" r="8" fill="#ececec"/></svg><div class="t" style="left:92.12px;top:89.8px;font-size:6.5px;line-height:8.5px;color:#d0d0d0;line-height:7px;transform:translateX(-50%) scaleX(0.9)">70</div><div style="position:absolute;left:105.68px;top:65.6px;width:25.52px;height:31.8px;background:#565656"></div><svg style="position:absolute;left:109.94px;top:70.3px;" width="17" height="17" viewBox="0 0 17 17"><circle cx="8.5" cy="8.5" r="8" fill="#ececec"/></svg><div class="t" style="left:118.44px;top:89.8px;font-size:6.5px;line-height:8.5px;color:#d0d0d0;line-height:7px;transform:translateX(-50%) scaleX(0.9)">100</div><div style="position:absolute;left:132.0px;top:65.6px;width:25.52px;height:31.8px;background:#565656"></div><svg style="position:absolute;left:136.26px;top:70.3px;" width="17" height="17" viewBox="0 0 17 17"><circle cx="8.5" cy="8.5" r="8" fill="#ececec"/></svg><div class="t" style="left:144.76px;top:89.8px;font-size:6.5px;line-height:8.5px;color:#d0d0d0;line-height:7px;transform:translateX(-50%) scaleX(0.9)">150</div><div style="position:absolute;left:0.4px;top:98.2px;width:25.52px;height:31.8px;background:#565656"></div><svg style="position:absolute;left:4.66px;top:102.9px;" width="17" height="17" viewBox="0 0 17 17"><circle cx="8.5" cy="8.5" r="8" fill="#ececec"/></svg><div class="t" style="left:13.16px;top:122.4px;font-size:6.5px;line-height:8.5px;color:#d0d0d0;line-height:7px;transform:translateX(-50%) scaleX(0.9)">200</div><div style="position:absolute;left:26.72px;top:98.2px;width:25.52px;height:31.8px;background:#565656"></div><svg style="position:absolute;left:30.98px;top:102.9px;" width="17" height="17" viewBox="0 0 17 17"><circle cx="8.5" cy="8.5" r="8" fill="#ececec"/></svg><div class="t" style="left:39.48px;top:122.4px;font-size:6.5px;line-height:8.5px;color:#d0d0d0;line-height:7px;transform:translateX(-50%) scaleX(0.9)">300</div><div style="position:absolute;left:53.04px;top:98.2px;width:25.52px;height:31.8px;background:#565656"></div><svg style="position:absolute;left:57.3px;top:102.9px;" width="17" height="17" viewBox="0 0 17 17"><circle cx="8.5" cy="8.5" r="8" fill="#ececec"/></svg><div class="t" style="left:65.8px;top:122.4px;font-size:6.5px;line-height:8.5px;color:#d0d0d0;line-height:7px;transform:translateX(-50%) scaleX(0.9)">400</div><div style="position:absolute;left:79.36px;top:98.2px;width:25.52px;height:31.8px;background:#565656"></div><svg style="position:absolute;left:83.62px;top:102.9px;" width="17" height="17" viewBox="0 0 17 17"><circle cx="8.5" cy="8.5" r="8" fill="#ececec"/></svg><div class="t" style="left:92.12px;top:122.4px;font-size:6.5px;line-height:8.5px;color:#d0d0d0;line-height:7px;transform:translateX(-50%) scaleX(0.9)">500</div><div style="position:absolute;left:105.68px;top:98.2px;width:25.52px;height:31.8px;background:#565656"></div><svg style="position:absolute;left:109.94px;top:102.9px;" width="17" height="17" viewBox="0 0 17 17"><circle cx="8.5" cy="8.5" r="8" fill="#ececec"/></svg><div class="t" style="left:118.44px;top:122.4px;font-size:6.5px;line-height:8.5px;color:#d0d0d0;line-height:7px;transform:translateX(-50%) scaleX(0.9)">700</div><div style="position:absolute;left:132.0px;top:98.2px;width:25.52px;height:31.8px;background:#565656"></div><svg style="position:absolute;left:136.26px;top:102.9px;" width="17" height="17" viewBox="0 0 17 17"><circle cx="8.5" cy="8.5" r="8" fill="#ececec"/></svg><div class="t" style="left:144.76px;top:122.4px;font-size:6.5px;line-height:8.5px;color:#d0d0d0;line-height:7px;transform:translateX(-50%) scaleX(0.9)">1000</div></div><div style="position:absolute;left:1001px;top:397.5px;width:10px;height:127px;background:#383838"></div><div style="position:absolute;left:1001.5px;top:404px;width:9px;height:110px;background:#6a6a6a;border-radius:3px"></div><svg style="position:absolute;left:1001px;top:396.5px;" width="10" height="8" viewBox="0 0 10 8"><path d="M5 2L7.4 6H2.6Z" fill="#ccc"/></svg><svg style="position:absolute;left:1001px;top:516.5px;" width="10" height="8" viewBox="0 0 10 8"><path d="M5 6L7.4 2H2.6Z" fill="#ccc"/></svg><div style="position:absolute;left:0px;top:523.4px;width:818px;height:15px;background:#232323"></div><div style="position:absolute;left:818px;top:524.5px;width:194.4px;height:14px;background:#232323"></div><div class="t" style="left:2px;top:528px;font-size:8px;line-height:9px;color:#d6d6d6;white-space:pre;letter-spacing:-0.1px">20000 * 15000 pixel   (84.7 * 63.5cm)   600 dpi   6 %   ( 11488, 652 )</div></div><div style="position:absolute;left:0px;top:537.4px;width:1012.4px;height:32.2px;background:linear-gradient(to right,#0f2b37 0%,#102a3a 35%,#13264a 65%,#151f4e 100%)"></div><div><svg style="position:absolute;left:367px;top:545.5px;" width="16" height="16" viewBox="0 0 16 16"><defs><linearGradient id="wg" x1="0" y1="0" x2="1" y2="1"><stop offset="0" stop-color="#7fe0ff"/><stop offset="1" stop-color="#1f9be8"/></linearGradient></defs><path d="M0 0H7.5V7.5H0ZM8.5 0H16V7.5H8.5ZM0 8.5H7.5V16H0ZM8.5 8.5H16V16H8.5Z" fill="url(#wg)"/></svg><svg style="position:absolute;left:396px;top:545.5px;" width="16" height="16" viewBox="0 0 16 16"><circle cx="9" cy="6.6" r="5" fill="#1d2c3a" stroke="#f2f2f2" stroke-width="1.7"/><path d="M5.4 10.4L1.8 14.4" stroke="#f2f2f2" stroke-width="2" stroke-linecap="round"/></svg><svg style="position:absolute;left:424px;top:545.5px;" width="18" height="16" viewBox="0 0 18 16"><rect x="0.5" y="5" width="11.5" height="9.5" rx="1" fill="#8e8e8e"/><rect x="5.5" y="1.5" width="12" height="10" rx="1" fill="#f2f2f2"/></svg><svg style="position:absolute;left:454.5px;top:546px;" width="16" height="15" viewBox="0 0 16 15"><rect width="16" height="15" rx="1.5" fill="#1b7ed6"/><rect x="1.6" y="1.6" width="5.6" height="11.8" fill="#f4f8ff"/><rect x="8.6" y="1.6" width="5.8" height="6" fill="#7cc6ff"/><rect x="8.6" y="8.8" width="5.8" height="4.6" fill="#f4f8ff"/></svg><svg style="position:absolute;left:483px;top:545.5px;" width="17" height="17" viewBox="0 0 17 17"><circle cx="8.6" cy="8" r="7.6" fill="#7b6fd0"/><path d="M2.4 12.2L1.6 16L6 14.4Z" fill="#7b6fd0"/><circle cx="8.6" cy="8" r="5" fill="#5548b0"/><rect x="5.2" y="5.8" width="5" height="4.4" rx="0.8" fill="#fff"/><path d="M10.4 7.6L12.4 6.2V9.8L10.4 8.4Z" fill="#fff"/></svg><svg style="position:absolute;left:512px;top:545px;" width="18" height="18" viewBox="0 0 18 18"><defs><linearGradient id="eg" x1="0" y1="0" x2="1" y2="1"><stop offset="0" stop-color="#37d48f"/><stop offset="0.5" stop-color="#1d9fe0"/><stop offset="1" stop-color="#1565c8"/></linearGradient></defs><circle cx="9" cy="9" r="8.4" fill="url(#eg)"/><path d="M3.2 10.6Q4 5.6 9.4 5.4Q13.8 5.6 14 9.2Q13.6 11.2 11.4 11Q10.4 10.8 10.8 9.6Q10.4 8.2 8.6 8.4Q6.6 8.8 6.8 11.2Q7.4 14.6 11.4 15.2Q5 17.4 3.2 10.6Z" fill="#0c4d9e"/><path d="M1 7.8Q2.6 1.2 9.2 1Q15.6 1.4 16.8 7.6Q14.6 4.4 9.6 4.4Q3.6 4.6 1 7.8Z" fill="#4be0a0"/></svg><svg style="position:absolute;left:541px;top:546.5px;" width="17" height="15" viewBox="0 0 17 15"><path d="M0.5 5.5L8.5 0.5L16.5 5.5V14H0.5Z" fill="#1a78d2"/><path d="M2 5.5H15V12H2Z" fill="#e8f2fc"/><path d="M0.5 6L8.5 11L16.5 6V14.5H0.5Z" fill="#3aa0ee"/><path d="M0.5 14.5L8.5 9.6L16.5 14.5Z" fill="#1d86dc"/></svg><svg style="position:absolute;left:570px;top:546px;" width="18" height="16" viewBox="0 0 18 16"><path d="M0.5 2.2Q0.5 1 1.6 1H6.2L8 2.8H16.4Q17.5 2.8 17.5 4V14H0.5Z" fill="#f2b62a"/><path d="M0.5 5.2H17.5V14.4Q17.5 15 16.8 15H1.2Q0.5 15 0.5 14.4Z" fill="#ffd95c"/><rect x="5" y="11" width="8" height="4" fill="#2c7fd0"/></svg><svg style="position:absolute;left:599px;top:546px;" width="18" height="15" viewBox="0 0 18 15"><path d="M1 4Q1 3 2 3H4.6L6 1H12L13.4 3H16Q17 3 17 4V13Q17 14 16 14H2Q1 14 1 13Z" fill="#8e8e92"/><circle cx="9" cy="8.4" r="4" fill="#5560b8"/><circle cx="9" cy="8.4" r="2.4" fill="#8ea0f0"/></svg><div style="position:absolute;left:623px;top:541px;width:27px;height:26px;background:rgba(255,255,255,0.07);border-radius:3px"></div><svg style="position:absolute;left:628px;top:544.5px;" width="17" height="18" viewBox="0 0 17 18"><rect width="17" height="18" rx="3.5" fill="#f6f3ee"/><circle cx="8.6" cy="9" r="5.6" fill="#28a046"/><path d="M8.6 9L12.6 4.8A5.6 5.6 0 0 1 13.4 11.6Z" fill="#e8413c"/><path d="M3.6 11.4A5.6 5.6 0 0 0 11 14L8.2 9.6Z" fill="#2479c8"/><circle cx="7.6" cy="8.2" r="2.5" fill="#f8f8f0"/></svg><div style="position:absolute;left:632px;top:565.5px;width:9px;height:1.6px;background:#62b5f2;border-radius:1px"></div><svg style="position:absolute;left:867px;top:550.5px;" width="10" height="6" viewBox="0 0 10 6"><path d="M1 5L5 1L9 5" stroke="#f0f0f0" stroke-width="1" fill="none"/></svg><div class="t" style="left:887px;top:549px;font-size:8.5px;line-height:10.5px;color:#f4f4f4;line-height:10px;letter-spacing:-0.2px">ENG</div><svg style="position:absolute;left:913.5px;top:548.5px;" width="12" height="10" viewBox="0 0 12 10"><path d="M1 3.6Q6 -1 11 3.6M2.8 5.6Q6 2.6 9.2 5.6M4.6 7.4Q6 6 7.4 7.4" stroke="#f4f4f4" stroke-width="1.1" fill="none"/><circle cx="6" cy="8.8" r="0.9" fill="#f4f4f4"/></svg><svg style="position:absolute;left:930px;top:549.5px;" width="10" height="9" viewBox="0 0 10 9"><path d="M1 3.2H2.8L5.4 1V8L2.8 5.8H1Z" fill="none" stroke="#f4f4f4" stroke-width="0.9"/><path d="M7 2.6Q8.4 4.5 7 6.4" stroke="#aab" stroke-width="0.8" fill="none"/></svg><svg style="position:absolute;left:945px;top:548.5px;" width="12" height="10" viewBox="0 0 12 10"><rect x="3" y="2.4" width="8.4" height="5.6" rx="1.4" fill="#f0f0f0"/><rect x="1.6" y="1" width="2.6" height="7.6" rx="0.8" fill="#f0f0f0"/><path d="M5.4 7.2L8 3.4V5.2H9.4" stroke="#1a2a52" stroke-width="0.8" fill="none"/></svg><div class="t" style="left:1000.3px;top:543.3px;font-size:8.5px;line-height:10.5px;color:#f6f6f6;line-height:10px;transform:translateX(-100%);letter-spacing:-0.2px">7:52 PM</div><div class="t" style="left:1000.3px;top:554px;font-size:8.5px;line-height:10.5px;color:#f6f6f6;line-height:10px;transform:translateX(-100%);letter-spacing:-0.2px">2/2/2022</div></div></body></html>
